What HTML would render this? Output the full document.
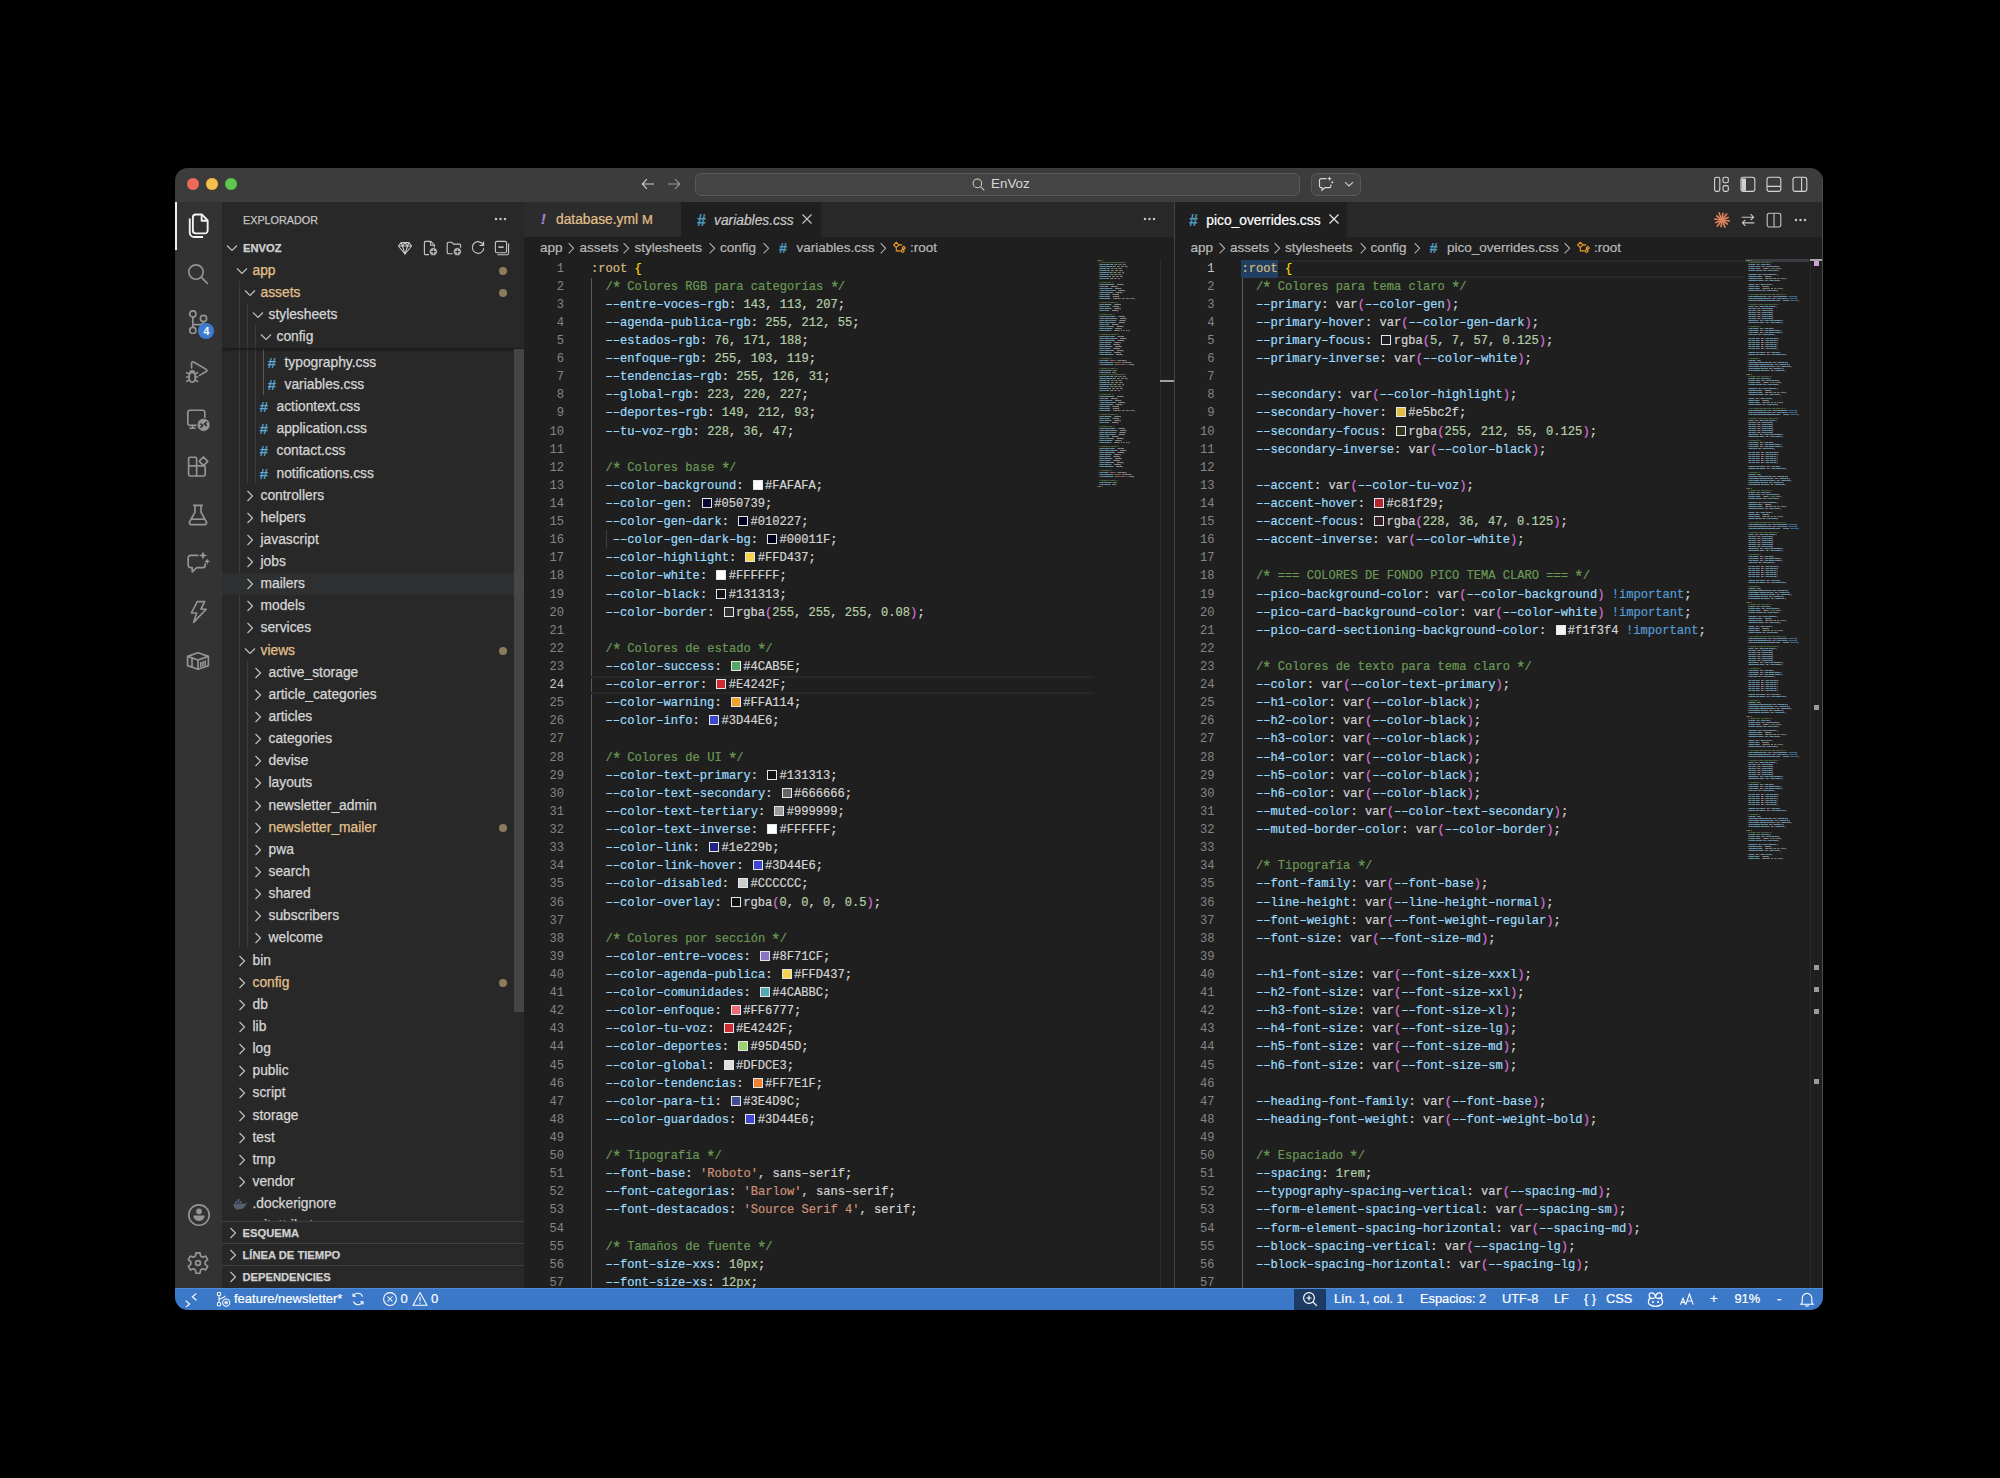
<!DOCTYPE html>
<html><head><meta charset="utf-8"><title>VS Code</title>
<style>
html,body{margin:0;padding:0;background:#000;width:2000px;height:1478px;overflow:hidden}
body{position:relative;font-family:"Liberation Sans",sans-serif}
.win{position:absolute;left:175px;top:168px;width:1648px;height:1142px;border-radius:13px;overflow:hidden;background:#1f1f1f}
.in{position:absolute;left:-175px;top:-168px;width:2000px;height:1478px}
.abs{position:absolute}
.titlebar{position:absolute;left:175px;top:168px;width:1648px;height:34px;background:#3c3c3c}
.tl{position:absolute;width:12px;height:12px;border-radius:50%;top:178px}
.actbar{position:absolute;left:175px;top:202px;width:47px;height:1086px;background:#333333}
.sidebar{position:absolute;left:222px;top:202px;width:302px;height:1086px;background:#282828}
.ed1{position:absolute;left:524px;top:202px;width:650px;height:1086px;background:#1f1f1f}
.ed2{position:absolute;left:1175px;top:202px;width:648px;height:1086px;background:#1f1f1f}
.tabbar{position:absolute;top:202px;height:35px;background:#282828}
.status{position:absolute;left:175px;top:1288px;width:1648px;height:22px;background:#3b78c8;border-top:1px solid #4f8ad8;box-sizing:border-box}
.sb{position:absolute;top:1288px;height:22px;line-height:22px;color:#fff;font-size:12.5px;white-space:pre;-webkit-text-stroke:0.2px currentColor}
/* sidebar text */
.tr{position:absolute;height:22px;line-height:22px;font-size:13.8px;color:#d6d6d6;white-space:pre;-webkit-text-stroke:0.25px currentColor}
.tr.git{color:#e2c08d}
.hash{position:absolute;height:22px;line-height:22px;font-size:15.5px;color:#5aa5d4;font-weight:bold;white-space:pre}
.tchev{position:absolute;width:16px;height:16px}
.chev{width:16px;height:16px;display:block}
.gdot{position:absolute;width:8px;height:8px;border-radius:50%;background:#8d7b5e}
.guide{position:absolute;width:1px;background:#3e3e3e}
/* code */
.ln{position:absolute;width:40px;text-align:right;height:18px;line-height:18px;font-family:"Liberation Mono",monospace;font-size:12.1px;color:#858585;white-space:pre}
.ln.cur{color:#c6c6c6}
.cl{position:absolute;height:18px;line-height:18px;font-family:"Liberation Mono",monospace;font-size:12.1px;color:#d4d4d4;white-space:pre;-webkit-text-stroke:0.2px currentColor}
.p{color:#9cdcfe}.n{color:#b5cea8}.c{color:#6a9955}.s{color:#ce9178}.pr{color:#da70d6}.imp{color:#569cd6}.sel{color:#d7ba7d}.sc{color:#d7ba7d}.br{color:#ffd700}
.sw{display:inline-block;box-sizing:border-box;width:10px;height:10px;margin:0 2.26px 0 2px;border:1px solid #e6e6e6;vertical-align:-1px;background:var(--c);filter:saturate(.85)}
.crumb{position:absolute;top:237px;height:22px;line-height:22px;font-size:13.5px;color:#bababa;white-space:pre;-webkit-text-stroke:0.2px currentColor}
.tabt{position:absolute;top:202px;height:35px;line-height:35px;font-size:13.8px;white-space:pre;-webkit-text-stroke:0.2px currentColor}
.ico{position:absolute}
.dock{position:absolute;width:15px;height:10px}
.ast{display:inline-block;transform:translateY(2px) scale(1.3);font-weight:normal}
.mini{position:absolute;transform-origin:0 0;font-family:"Liberation Mono",monospace;font-size:12.1px;line-height:17.5px;color:#d4d4d4;white-space:pre;width:600px;font-weight:bold;opacity:.7;-webkit-text-stroke:1.5px currentColor}
.mini div{height:17.5px}
.swm{display:inline-block;width:14.5px;height:10px}

</style></head>
<body>
<div class="win"><div class="in">
<!-- ============ TITLE BAR ============ -->
<div class="titlebar"></div>
<div class="tl" style="left:186.7px;background:#ed6a5e;box-shadow:inset 0 0 0 .5px #d2574c"></div>
<div class="tl" style="left:206px;background:#f4bf4f;box-shadow:inset 0 0 0 .5px #d6a243"></div>
<div class="tl" style="left:225.3px;background:#61c554;box-shadow:inset 0 0 0 .5px #52a93f"></div>
<svg class="ico" style="left:640px;top:176px" width="16" height="16" viewBox="0 0 16 16"><path d="M14 8H2.5M7 3.2L2.2 8 7 12.8" fill="none" stroke="#d0d0d0" stroke-width="1.1"/></svg>
<svg class="ico" style="left:666px;top:176px" width="16" height="16" viewBox="0 0 16 16"><path d="M2 8h11.5M9 3.2L13.8 8 9 12.8" fill="none" stroke="#9a9a9a" stroke-width="1.1"/></svg>
<div class="abs" style="left:695px;top:172.5px;width:605px;height:23.5px;box-sizing:border-box;border:1px solid #595959;border-radius:6px;background:#444444"></div>
<svg class="ico" style="left:971px;top:177px" width="15" height="15" viewBox="0 0 16 16"><circle cx="6.8" cy="6.8" r="4.6" fill="none" stroke="#cfcfcf" stroke-width="1.1"/><path d="M10.2 10.2l4 4" stroke="#cfcfcf" stroke-width="1.2"/></svg>
<div class="abs" style="left:991px;top:172px;height:24px;line-height:24px;font-size:13.4px;color:#d8d8d8">EnVoz</div>
<div class="abs" style="left:1310.5px;top:172.5px;width:50px;height:23.5px;box-sizing:border-box;border:1px solid #595959;border-radius:6px;background:#444444"></div>
<svg class="ico" style="left:1317px;top:175px" width="18" height="18" viewBox="0 0 18 18"><path d="M9.5 3.6H4.2a1.7 1.7 0 0 0-1.7 1.7v5.6a1.7 1.7 0 0 0 1.7 1.7h.8v2.7l3-2.7h4.2a1.7 1.7 0 0 0 1.7-1.7V9.4" fill="none" stroke="#d8d8d8" stroke-width="1.15"/><path d="M12.5 1.2l.7 1.7 1.7.7-1.7.7-.7 1.7-.7-1.7-1.7-.7 1.7-.7zM15.2 5.6l.5 1.1 1.1.5-1.1.5-.5 1.1-.5-1.1-1.1-.5 1.1-.5z" fill="#d8d8d8"/></svg>
<svg class="ico" style="left:1343px;top:178px" width="12" height="12" viewBox="0 0 12 12"><path d="M2 4.2l4 3.8 4-3.8" fill="none" stroke="#d0d0d0" stroke-width="1.05"/></svg>
<!-- right layout icons -->
<svg class="ico" style="left:1713px;top:176px" width="17" height="17" viewBox="0 0 17 17" fill="none" stroke="#d6d6d6" stroke-width="1.1"><rect x="1.6" y="1.2" width="5.2" height="14.2" rx="1.8"/><rect x="10" y="1.2" width="5.3" height="5.6" rx="1.6"/><rect x="10" y="9.6" width="5.3" height="5.8" rx="1.6"/></svg>
<svg class="ico" style="left:1740px;top:176px" width="16" height="17" viewBox="0 0 16 17"><rect x="1" y="1.2" width="13.8" height="14.2" rx="2.4" fill="none" stroke="#d6d6d6" stroke-width="1.1"/><path d="M1.6 2.5h4.4v12.3H1.6z" fill="#cfcfcf"/></svg>
<svg class="ico" style="left:1766px;top:176px" width="16" height="17" viewBox="0 0 16 17" fill="none" stroke="#d6d6d6" stroke-width="1.1"><rect x="1" y="1.2" width="13.8" height="14.2" rx="2.4"/><path d="M1.2 10.4h13.4"/></svg>
<svg class="ico" style="left:1792px;top:176px" width="16" height="17" viewBox="0 0 16 17" fill="none" stroke="#d6d6d6" stroke-width="1.1"><rect x="1" y="1.2" width="13.8" height="14.2" rx="2.4"/><path d="M9.6 1.4v14"/></svg>

<!-- ============ ACTIVITY BAR ============ -->
<div class="actbar"></div>
<div class="abs" style="left:175px;top:202px;width:1.5px;height:48px;background:#f0f0f0"></div>
<svg class="ico" style="left:185.5px;top:213.0px" width="25" height="25" viewBox="0 0 24 24" ><g fill="none" stroke="#f4f4f4" stroke-width="1.8" stroke-linejoin="round"><path d="M9.4 1.4h5.8l5.6 5.8v9.6a2.8 2.8 0 0 1-2.8 2.8H9.4a2.8 2.8 0 0 1-2.8-2.8V4.2a2.8 2.8 0 0 1 2.8-2.8z"/><path d="M15 1.6v5.8h5.7"/><path d="M3.6 5.2v13.4a4.4 4.4 0 0 0 4.4 4.4h8.4"/></g></svg>
<svg class="ico" style="left:186.0px;top:261.5px" width="24" height="24" viewBox="0 0 24 24" ><g fill="none" stroke="#959595" stroke-width="1.65"><circle cx="10" cy="10" r="7.2"/><path d="M15.2 15.2l6.6 6.6"/></g></svg>
<svg class="ico" style="left:186.0px;top:310.0px" width="24" height="24" viewBox="0 0 24 24" ><g fill="none" stroke="#959595" stroke-width="1.65"><circle cx="6.8" cy="3.9" r="3.1"/><circle cx="6.8" cy="20.5" r="3.1"/><circle cx="17.5" cy="8.5" r="3.1"/><path d="M6.8 7v10.4M6.8 14.6h7.4a3.3 3.3 0 0 0 3.3-3.1"/></g></svg>
<div class="abs" style="left:198.3px;top:323px;width:16px;height:16px;border-radius:50%;background:#3b7bd0;color:#fff;font-size:10.5px;font-weight:bold;line-height:16px;text-align:center">4</div>
<svg class="ico" style="left:186.0px;top:359.0px" width="24" height="24" viewBox="0 0 24 24" ><g fill="none" stroke="#959595" stroke-width="1.65" stroke-linejoin="round" stroke-linecap="round"><path d="M5.6 9V4.1a1.3 1.3 0 0 1 2-1.1l12.7 7.4a1.2 1.2 0 0 1 0 2.1l-6.8 3.9"/><path d="M3.2 16.4a3 3 0 0 1 6 0v3.4a3 3.4 0 0 1-6 0z"/><path d="M4 13.8a2.2 2 0 0 1 4.4 0M.9 13.6l2.2 1.6M11.5 13.6l-2.2 1.6M.7 18h2.4M9.3 18h2.4M.9 22.4l2.2-1.6M11.5 22.4l-2.2-1.6"/></g></svg>
<svg class="ico" style="left:186.0px;top:407.5px" width="24" height="24" viewBox="0 0 24 24" ><g fill="none" stroke="#959595" stroke-width="1.65" stroke-linecap="round"><path d="M11 17.4H4A2.2 2.2 0 0 1 1.8 15.2V4.4A2.2 2.2 0 0 1 4 2.2h12.6a2.2 2.2 0 0 1 2.2 2.2v6.2"/><path d="M6.6 17.6v2.4M4 20.2h5.2"/></g><circle cx="17.6" cy="16.9" r="6.6" fill="#959595" stroke="#333" stroke-width="1"/><path d="M14.3 15.6l2.5 2-2.5 2M20.9 13.9l-2.5 2 2.5 2" fill="none" stroke="#2b2b2b" stroke-width="1.35"/></svg>
<svg class="ico" style="left:186.0px;top:455.0px" width="24" height="24" viewBox="0 0 24 24" ><g fill="none" stroke="#959595" stroke-width="1.65" stroke-linejoin="round"><path d="M2.6 8.2V3.6a1.4 1.4 0 0 1 1.4-1.4h5.2a1.4 1.4 0 0 1 1.4 1.4v7.2h7.2a1.4 1.4 0 0 1 1.4 1.4v7.4a1.4 1.4 0 0 1-1.4 1.4H4a1.4 1.4 0 0 1-1.4-1.4z"/><path d="M2.6 10.8h8M10.6 10.8v10.6"/><path d="M13.2 6.2l4.2-4.2 4.4 4.4-4.2 4.2z"/></g></svg>
<svg class="ico" style="left:186.0px;top:503.0px" width="24" height="24" viewBox="0 0 24 24" ><g fill="none" stroke="#959595" stroke-width="1.65" stroke-linejoin="round"><path d="M7 2.4h10M9 2.6v6.6L3.6 19a1.8 1.8 0 0 0 1.6 2.6h13.6a1.8 1.8 0 0 0 1.6-2.6L15 9.2V2.6"/><path d="M5.6 16.2h12.8"/></g></svg>
<svg class="ico" style="left:186.0px;top:551.0px" width="24" height="24" viewBox="0 0 24 24" ><g fill="none" stroke="#959595" stroke-width="1.65" stroke-linejoin="round"><path d="M12.4 4.4H4.6a2.4 2.4 0 0 0-2.4 2.4v7.4a2.4 2.4 0 0 0 2.4 2.4h1.6v4.2l4.6-4.2h6a2.4 2.4 0 0 0 2.4-2.4v-2"/></g><path d="M17 .2l1.2 3 3 1.2-3 1.2-1.2 3-1.2-3-3-1.2 3-1.2zM21.2 7.4l.9 2.1 2.1.9-2.1.9-.9 2.1-.9-2.1-2.1-.9 2.1-.9z" fill="#959595"/></svg>
<svg class="ico" style="left:186.0px;top:600.0px" width="24" height="24" viewBox="0 0 24 24" ><path d="M11.2 1.6h7.4l-3.6 7.6h5.2L7.6 22.4l3-9.4H5.4z" fill="none" stroke="#959595" stroke-width="1.65" stroke-linejoin="round"/></svg>
<svg class="ico" style="left:186.0px;top:648.0px" width="24" height="24" viewBox="0 0 24 24" ><g fill="none" stroke="#959595" stroke-width="1.65" stroke-linejoin="round"><path d="M1.6 8.4L12 4.8l10.4 3.6v9.2L12 21.2 1.6 17.6z"/><path d="M1.6 8.4L12 12l10.4-3.6M12 12v9.2M6 10v9"/><path d="M14.8 14v5M17 13.3v5M19.2 12.5v5"/></g></svg>
<svg class="ico" style="left:186.5px;top:1203.0px" width="24" height="24" viewBox="0 0 24 24" ><circle cx="12" cy="12" r="10.2" fill="none" stroke="#959595" stroke-width="1.65"/><circle cx="12" cy="8.4" r="2.8" fill="#959595"/><path d="M6.4 12.6h11.2c0 3.2-2.4 5.4-5.6 5.4s-5.6-2.2-5.6-5.4z" fill="#959595"/></svg>
<svg class="ico" style="left:186.0px;top:1251.0px" width="24" height="24" viewBox="0 0 24 24" ><g fill="none" stroke="#959595" stroke-width="1.65" stroke-linejoin="round"><path d="M10 1.8h4l.6 3.2 2 1.2 3.1-1.1 2 3.5-2.5 2.1v2.6l2.5 2.1-2 3.5-3.1-1.1-2 1.2-.6 3.2h-4l-.6-3.2-2-1.2-3.1 1.1-2-3.5 2.5-2.1v-2.6L2.3 8.6l2-3.5 3.1 1.1 2-1.2z"/><circle cx="12" cy="12" r="2.4"/></g></svg>

<!-- ============ SIDEBAR ============ -->
<div class="sidebar"></div>
<div class="tr" style="left:243px;top:209px;font-size:10.8px;color:#c4c4c4">EXPLORADOR</div>
<div class="abs" style="left:494px;top:213px;width:13px;height:12px"><svg width="13" height="12" viewBox="0 0 13 12" style="display:block"><circle cx="2" cy="6" r="1.25" fill="#c5c5c5"/><circle cx="6.5" cy="6" r="1.25" fill="#c5c5c5"/><circle cx="11" cy="6" r="1.25" fill="#c5c5c5"/></svg></div>
<div class="tchev" style="left:224px;top:240px"><svg class="chev" viewBox="0 0 16 16"><path d="M3 5.5l5 5 5-5" fill="none" stroke="#c5c5c5" stroke-width="1.1"/></svg></div>
<div class="tr" style="left:243px;top:237px;font-size:11.2px;font-weight:bold;color:#d0d0d0">ENVOZ</div>
<svg class="ico" style="left:397.0px;top:240.0px" width="16" height="16" viewBox="0 0 16 16" ><g fill="none" stroke="#c8c8c8" stroke-width="1.1" stroke-linejoin="round"><path d="M4.2 2.6h7.6l2.8 3.4L8 14 1.4 6z"/><path d="M1.4 6h13.2M5.4 6L8 14l2.6-8M4.2 2.6L5.4 6 8 2.6 10.6 6l1.2-3.4"/></g></svg>
<svg class="ico" style="left:422.0px;top:240.0px" width="16" height="16" viewBox="0 0 16 16" ><g fill="none" stroke="#c8c8c8" stroke-width="1.1" stroke-linejoin="round"><path d="M7 14.6H3.6a1.2 1.2 0 0 1-1.2-1.2V2.6a1.2 1.2 0 0 1 1.2-1.2h5.2l3.6 3.8v2.4"/><path d="M8.6 1.6v3.6h3.7"/></g><circle cx="11.4" cy="11.6" r="3.9" fill="#c2c2c2" stroke="#282828" stroke-width=".6"/><path d="M11.4 9.4v4.4M9.2 11.6h4.4" stroke="#2a2a2a" stroke-width="1.1"/></svg>
<svg class="ico" style="left:446.0px;top:240.0px" width="16" height="16" viewBox="0 0 16 16" ><g fill="none" stroke="#c8c8c8" stroke-width="1.1" stroke-linejoin="round"><path d="M6.6 13.8H2.4a1.2 1.2 0 0 1-1.2-1.2V3.4a1.2 1.2 0 0 1 1.2-1.2h2.8c.6 0 1 .4 1.4.9l.8 1h6a1.2 1.2 0 0 1 1.2 1.2v2.4"/></g><circle cx="11.4" cy="11.6" r="3.9" fill="#c2c2c2" stroke="#282828" stroke-width=".6"/><path d="M11.4 9.4v4.4M9.2 11.6h4.4" stroke="#2a2a2a" stroke-width="1.1"/></svg>
<svg class="ico" style="left:470.0px;top:240.0px" width="16" height="16" viewBox="0 0 16 16" ><g fill="none" stroke="#c8c8c8" stroke-width="1.15"><path d="M13.4 5.2a5.8 5.8 0 1 0 .4 3.2"/><path d="M13.6 1.4v4h-4"/></g></svg>
<svg class="ico" style="left:494.0px;top:240.0px" width="16" height="16" viewBox="0 0 16 16" ><g fill="none" stroke="#c8c8c8" stroke-width="1.1"><rect x="1.4" y="1.4" width="11.2" height="11.4" rx="1.6"/><path d="M14.6 3.6v9.4a1.8 1.8 0 0 1-1.8 1.8H3.4"/></g><path d="M4.4 7.1h5.2" stroke="#b8b8b8" stroke-width="1.8"/></svg>
<div class="guide" style="left:239px;top:281px;height:667px;background:#3a3a3a"></div>
<div class="guide" style="left:247px;top:303px;height:180px;background:#3a3a3a"></div>
<div class="guide" style="left:255px;top:325px;height:158px;background:#3a3a3a"></div>
<div class="guide" style="left:263px;top:348px;height:47px;background:#585858"></div>
<div class="guide" style="left:247px;top:660px;height:288px;background:#3a3a3a"></div>
<div class="tchev" style="left:233.5px;top:262.8px"><svg class="chev" viewBox="0 0 16 16"><path d="M3 5.5l5 5 5-5" fill="none" stroke="#c5c5c5" stroke-width="1.1"/></svg></div><div class="tr git" style="left:252.5px;top:259.8px">app</div><div class="gdot" style="left:499px;top:266.8px"></div>
<div class="tchev" style="left:241.5px;top:284.8px"><svg class="chev" viewBox="0 0 16 16"><path d="M3 5.5l5 5 5-5" fill="none" stroke="#c5c5c5" stroke-width="1.1"/></svg></div><div class="tr git" style="left:260.5px;top:281.8px">assets</div><div class="gdot" style="left:499px;top:288.8px"></div>
<div class="tchev" style="left:249.5px;top:306.8px"><svg class="chev" viewBox="0 0 16 16"><path d="M3 5.5l5 5 5-5" fill="none" stroke="#c5c5c5" stroke-width="1.1"/></svg></div><div class="tr" style="left:268.5px;top:303.8px">stylesheets</div>
<div class="tchev" style="left:257.5px;top:328.8px"><svg class="chev" viewBox="0 0 16 16"><path d="M3 5.5l5 5 5-5" fill="none" stroke="#c5c5c5" stroke-width="1.1"/></svg></div><div class="tr" style="left:276.5px;top:325.8px">config</div>
<div class="abs" style="left:222px;top:348.3px;width:302px;height:1.2px;background:#1c1c1c;box-shadow:0 1px 2px #161616"></div>
<div class="abs" style="left:222px;top:572.5px;width:302px;height:22px;background:#2e2f31"></div>
<div class="hash" style="left:267.5px;top:351.8px">#</div><div class="tr" style="left:284.5px;top:351.8px">typography.css</div>
<div class="hash" style="left:267.5px;top:373.94px">#</div><div class="tr" style="left:284.5px;top:373.94px">variables.css</div>
<div class="hash" style="left:259.5px;top:396.08px">#</div><div class="tr" style="left:276.5px;top:396.08px">actiontext.css</div>
<div class="hash" style="left:259.5px;top:418.21999999999997px">#</div><div class="tr" style="left:276.5px;top:418.21999999999997px">application.css</div>
<div class="hash" style="left:259.5px;top:440.35999999999996px">#</div><div class="tr" style="left:276.5px;top:440.35999999999996px">contact.css</div>
<div class="hash" style="left:259.5px;top:462.49999999999994px">#</div><div class="tr" style="left:276.5px;top:462.49999999999994px">notifications.css</div>
<div class="tchev" style="left:241.5px;top:487.63999999999993px"><svg class="chev" viewBox="0 0 16 16"><path d="M5.5 3l5 5-5 5" fill="none" stroke="#c5c5c5" stroke-width="1.1"/></svg></div><div class="tr" style="left:260.5px;top:484.63999999999993px">controllers</div>
<div class="tchev" style="left:241.5px;top:509.78px"><svg class="chev" viewBox="0 0 16 16"><path d="M5.5 3l5 5-5 5" fill="none" stroke="#c5c5c5" stroke-width="1.1"/></svg></div><div class="tr" style="left:260.5px;top:506.78px">helpers</div>
<div class="tchev" style="left:241.5px;top:531.92px"><svg class="chev" viewBox="0 0 16 16"><path d="M5.5 3l5 5-5 5" fill="none" stroke="#c5c5c5" stroke-width="1.1"/></svg></div><div class="tr" style="left:260.5px;top:528.92px">javascript</div>
<div class="tchev" style="left:241.5px;top:554.06px"><svg class="chev" viewBox="0 0 16 16"><path d="M5.5 3l5 5-5 5" fill="none" stroke="#c5c5c5" stroke-width="1.1"/></svg></div><div class="tr" style="left:260.5px;top:551.06px">jobs</div>
<div class="tchev" style="left:241.5px;top:576.1999999999999px"><svg class="chev" viewBox="0 0 16 16"><path d="M5.5 3l5 5-5 5" fill="none" stroke="#c5c5c5" stroke-width="1.1"/></svg></div><div class="tr" style="left:260.5px;top:573.1999999999999px">mailers</div>
<div class="tchev" style="left:241.5px;top:598.3399999999999px"><svg class="chev" viewBox="0 0 16 16"><path d="M5.5 3l5 5-5 5" fill="none" stroke="#c5c5c5" stroke-width="1.1"/></svg></div><div class="tr" style="left:260.5px;top:595.3399999999999px">models</div>
<div class="tchev" style="left:241.5px;top:620.4799999999999px"><svg class="chev" viewBox="0 0 16 16"><path d="M5.5 3l5 5-5 5" fill="none" stroke="#c5c5c5" stroke-width="1.1"/></svg></div><div class="tr" style="left:260.5px;top:617.4799999999999px">services</div>
<div class="tchev" style="left:241.5px;top:642.6199999999999px"><svg class="chev" viewBox="0 0 16 16"><path d="M3 5.5l5 5 5-5" fill="none" stroke="#c5c5c5" stroke-width="1.1"/></svg></div><div class="tr git" style="left:260.5px;top:639.6199999999999px">views</div><div class="gdot" style="left:499px;top:646.6199999999999px"></div>
<div class="tchev" style="left:249.5px;top:664.7599999999999px"><svg class="chev" viewBox="0 0 16 16"><path d="M5.5 3l5 5-5 5" fill="none" stroke="#c5c5c5" stroke-width="1.1"/></svg></div><div class="tr" style="left:268.5px;top:661.7599999999999px">active_storage</div>
<div class="tchev" style="left:249.5px;top:686.8999999999999px"><svg class="chev" viewBox="0 0 16 16"><path d="M5.5 3l5 5-5 5" fill="none" stroke="#c5c5c5" stroke-width="1.1"/></svg></div><div class="tr" style="left:268.5px;top:683.8999999999999px">article_categories</div>
<div class="tchev" style="left:249.5px;top:709.0399999999998px"><svg class="chev" viewBox="0 0 16 16"><path d="M5.5 3l5 5-5 5" fill="none" stroke="#c5c5c5" stroke-width="1.1"/></svg></div><div class="tr" style="left:268.5px;top:706.0399999999998px">articles</div>
<div class="tchev" style="left:249.5px;top:731.1799999999998px"><svg class="chev" viewBox="0 0 16 16"><path d="M5.5 3l5 5-5 5" fill="none" stroke="#c5c5c5" stroke-width="1.1"/></svg></div><div class="tr" style="left:268.5px;top:728.1799999999998px">categories</div>
<div class="tchev" style="left:249.5px;top:753.3199999999998px"><svg class="chev" viewBox="0 0 16 16"><path d="M5.5 3l5 5-5 5" fill="none" stroke="#c5c5c5" stroke-width="1.1"/></svg></div><div class="tr" style="left:268.5px;top:750.3199999999998px">devise</div>
<div class="tchev" style="left:249.5px;top:775.4599999999998px"><svg class="chev" viewBox="0 0 16 16"><path d="M5.5 3l5 5-5 5" fill="none" stroke="#c5c5c5" stroke-width="1.1"/></svg></div><div class="tr" style="left:268.5px;top:772.4599999999998px">layouts</div>
<div class="tchev" style="left:249.5px;top:797.5999999999998px"><svg class="chev" viewBox="0 0 16 16"><path d="M5.5 3l5 5-5 5" fill="none" stroke="#c5c5c5" stroke-width="1.1"/></svg></div><div class="tr" style="left:268.5px;top:794.5999999999998px">newsletter_admin</div>
<div class="tchev" style="left:249.5px;top:819.7399999999998px"><svg class="chev" viewBox="0 0 16 16"><path d="M5.5 3l5 5-5 5" fill="none" stroke="#c5c5c5" stroke-width="1.1"/></svg></div><div class="tr git" style="left:268.5px;top:816.7399999999998px">newsletter_mailer</div><div class="gdot" style="left:499px;top:823.7399999999998px"></div>
<div class="tchev" style="left:249.5px;top:841.8799999999998px"><svg class="chev" viewBox="0 0 16 16"><path d="M5.5 3l5 5-5 5" fill="none" stroke="#c5c5c5" stroke-width="1.1"/></svg></div><div class="tr" style="left:268.5px;top:838.8799999999998px">pwa</div>
<div class="tchev" style="left:249.5px;top:864.0199999999998px"><svg class="chev" viewBox="0 0 16 16"><path d="M5.5 3l5 5-5 5" fill="none" stroke="#c5c5c5" stroke-width="1.1"/></svg></div><div class="tr" style="left:268.5px;top:861.0199999999998px">search</div>
<div class="tchev" style="left:249.5px;top:886.1599999999997px"><svg class="chev" viewBox="0 0 16 16"><path d="M5.5 3l5 5-5 5" fill="none" stroke="#c5c5c5" stroke-width="1.1"/></svg></div><div class="tr" style="left:268.5px;top:883.1599999999997px">shared</div>
<div class="tchev" style="left:249.5px;top:908.2999999999997px"><svg class="chev" viewBox="0 0 16 16"><path d="M5.5 3l5 5-5 5" fill="none" stroke="#c5c5c5" stroke-width="1.1"/></svg></div><div class="tr" style="left:268.5px;top:905.2999999999997px">subscribers</div>
<div class="tchev" style="left:249.5px;top:930.4399999999997px"><svg class="chev" viewBox="0 0 16 16"><path d="M5.5 3l5 5-5 5" fill="none" stroke="#c5c5c5" stroke-width="1.1"/></svg></div><div class="tr" style="left:268.5px;top:927.4399999999997px">welcome</div>
<div class="tchev" style="left:233.5px;top:952.5799999999997px"><svg class="chev" viewBox="0 0 16 16"><path d="M5.5 3l5 5-5 5" fill="none" stroke="#c5c5c5" stroke-width="1.1"/></svg></div><div class="tr" style="left:252.5px;top:949.5799999999997px">bin</div>
<div class="tchev" style="left:233.5px;top:974.7199999999997px"><svg class="chev" viewBox="0 0 16 16"><path d="M5.5 3l5 5-5 5" fill="none" stroke="#c5c5c5" stroke-width="1.1"/></svg></div><div class="tr git" style="left:252.5px;top:971.7199999999997px">config</div><div class="gdot" style="left:499px;top:978.7199999999997px"></div>
<div class="tchev" style="left:233.5px;top:996.8599999999997px"><svg class="chev" viewBox="0 0 16 16"><path d="M5.5 3l5 5-5 5" fill="none" stroke="#c5c5c5" stroke-width="1.1"/></svg></div><div class="tr" style="left:252.5px;top:993.8599999999997px">db</div>
<div class="tchev" style="left:233.5px;top:1018.9999999999998px"><svg class="chev" viewBox="0 0 16 16"><path d="M5.5 3l5 5-5 5" fill="none" stroke="#c5c5c5" stroke-width="1.1"/></svg></div><div class="tr" style="left:252.5px;top:1015.9999999999998px">lib</div>
<div class="tchev" style="left:233.5px;top:1041.1399999999999px"><svg class="chev" viewBox="0 0 16 16"><path d="M5.5 3l5 5-5 5" fill="none" stroke="#c5c5c5" stroke-width="1.1"/></svg></div><div class="tr" style="left:252.5px;top:1038.1399999999999px">log</div>
<div class="tchev" style="left:233.5px;top:1063.28px"><svg class="chev" viewBox="0 0 16 16"><path d="M5.5 3l5 5-5 5" fill="none" stroke="#c5c5c5" stroke-width="1.1"/></svg></div><div class="tr" style="left:252.5px;top:1060.28px">public</div>
<div class="tchev" style="left:233.5px;top:1085.42px"><svg class="chev" viewBox="0 0 16 16"><path d="M5.5 3l5 5-5 5" fill="none" stroke="#c5c5c5" stroke-width="1.1"/></svg></div><div class="tr" style="left:252.5px;top:1082.42px">script</div>
<div class="tchev" style="left:233.5px;top:1107.5600000000002px"><svg class="chev" viewBox="0 0 16 16"><path d="M5.5 3l5 5-5 5" fill="none" stroke="#c5c5c5" stroke-width="1.1"/></svg></div><div class="tr" style="left:252.5px;top:1104.5600000000002px">storage</div>
<div class="tchev" style="left:233.5px;top:1129.7000000000003px"><svg class="chev" viewBox="0 0 16 16"><path d="M5.5 3l5 5-5 5" fill="none" stroke="#c5c5c5" stroke-width="1.1"/></svg></div><div class="tr" style="left:252.5px;top:1126.7000000000003px">test</div>
<div class="tchev" style="left:233.5px;top:1151.8400000000004px"><svg class="chev" viewBox="0 0 16 16"><path d="M5.5 3l5 5-5 5" fill="none" stroke="#c5c5c5" stroke-width="1.1"/></svg></div><div class="tr" style="left:252.5px;top:1148.8400000000004px">tmp</div>
<div class="tchev" style="left:233.5px;top:1173.9800000000005px"><svg class="chev" viewBox="0 0 16 16"><path d="M5.5 3l5 5-5 5" fill="none" stroke="#c5c5c5" stroke-width="1.1"/></svg></div><div class="tr" style="left:252.5px;top:1170.9800000000005px">vendor</div>
<svg class="ico" style="left:232.5px;top:1199.1200000000006px" width="15" height="11" viewBox="0 0 15 11"><path d="M0.5 4.8h11.6c.6-1 1.6-1.4 2.4-1.2-.2.8-.8 1.4-1.6 1.6C12 8.6 9 10.6 5.2 10.6 2.2 10.6.6 8.4.5 4.8z" fill="#52616f"/><path d="M2 2.2h2v2H2zM4.4 2.2h2v2h-2zM6.8 2.2h2v2h-2zM4.4 0h2v2h-2z" fill="#52616f"/></svg><div class="tr" style="left:252.5px;top:1193.1200000000006px">.dockerignore</div>
<div class="tr" style="left:252.5px;top:1215.2600000000007px">.gitattributes</div>
<div class="abs" style="left:514px;top:349px;width:10px;height:663px;background:#4a4a4a;opacity:.85"></div>
<!-- bottom panels -->
<div class="abs" style="left:222px;top:1221px;width:302px;height:67px;background:#282828"></div>
<div class="abs" style="left:222px;top:1221px;width:302px;height:1px;background:#3f3f3f"></div>
<div class="abs" style="left:222px;top:1243px;width:302px;height:1px;background:#3f3f3f"></div>
<div class="abs" style="left:222px;top:1265px;width:302px;height:1px;background:#3f3f3f"></div>
<div class="tchev" style="left:225px;top:1224.5px"><svg class="chev" viewBox="0 0 16 16"><path d="M5.5 3l5 5-5 5" fill="none" stroke="#c5c5c5" stroke-width="1.1"/></svg></div>
<div class="tr" style="left:242.5px;top:1221.5px;font-size:11.2px;font-weight:bold;color:#d0d0d0">ESQUEMA</div>
<div class="tchev" style="left:225px;top:1246.5px"><svg class="chev" viewBox="0 0 16 16"><path d="M5.5 3l5 5-5 5" fill="none" stroke="#c5c5c5" stroke-width="1.1"/></svg></div>
<div class="tr" style="left:242.5px;top:1243.5px;font-size:11.2px;font-weight:bold;color:#d0d0d0">LÍNEA DE TIEMPO</div>
<div class="tchev" style="left:225px;top:1268.5px"><svg class="chev" viewBox="0 0 16 16"><path d="M5.5 3l5 5-5 5" fill="none" stroke="#c5c5c5" stroke-width="1.1"/></svg></div>
<div class="tr" style="left:242.5px;top:1265.5px;font-size:11.2px;font-weight:bold;color:#d0d0d0">DEPENDENCIES</div>

<!-- ============ EDITOR GROUP 1 ============ -->
<div class="ed1"></div>
<div class="tabbar" style="left:524px;width:650px"></div>
<div class="abs" style="left:524px;top:202px;width:157px;height:35px;background:#2c2c2c"></div>
<div class="abs" style="left:681px;top:202px;width:140px;height:35px;background:#1f1f1f"></div>
<div class="tabt" style="left:541px;color:#b180d7;font-weight:bold;font-style:italic;font-size:14px">!</div>
<div class="tabt" style="left:556px;color:#e2c08d">database.yml</div>
<div class="tabt" style="left:642px;color:#e2c08d;font-size:13px">M</div>
<div class="tabt" style="left:697px;top:202.5px;color:#519aba;font-weight:bold;font-size:16px">#</div>
<div class="tabt" style="left:714px;top:202.5px;color:#c8c8c8;font-style:italic">variables.css</div>
<svg class="ico" style="left:800px;top:212px" width="14" height="14" viewBox="0 0 14 14"><path d="M2.5 2.5l9 9M11.5 2.5l-9 9" stroke="#c5c5c5" stroke-width="1.1"/></svg>
<div class="abs" style="left:1143px;top:213px;width:13px;height:12px"><svg width="13" height="12" viewBox="0 0 13 12" style="display:block"><circle cx="2" cy="6" r="1.25" fill="#c5c5c5"/><circle cx="6.5" cy="6" r="1.25" fill="#c5c5c5"/><circle cx="11" cy="6" r="1.25" fill="#c5c5c5"/></svg></div>
<div class="crumb" style="left:540px">app</div>
<svg class="ico" style="left:566px;top:241.5px" width="10" height="13" viewBox="0 0 10 13"><path d="M2.6 1.2l5 5.1-5 5.1" fill="none" stroke="#b4b4b4" stroke-width="1.05"/></svg>
<div class="crumb" style="left:579.5px">assets</div>
<svg class="ico" style="left:621px;top:241.5px" width="10" height="13" viewBox="0 0 10 13"><path d="M2.6 1.2l5 5.1-5 5.1" fill="none" stroke="#b4b4b4" stroke-width="1.05"/></svg>
<div class="crumb" style="left:634.5px">stylesheets</div>
<svg class="ico" style="left:707px;top:241.5px" width="10" height="13" viewBox="0 0 10 13"><path d="M2.6 1.2l5 5.1-5 5.1" fill="none" stroke="#b4b4b4" stroke-width="1.05"/></svg>
<div class="crumb" style="left:720px">config</div>
<svg class="ico" style="left:761px;top:241.5px" width="10" height="13" viewBox="0 0 10 13"><path d="M2.6 1.2l5 5.1-5 5.1" fill="none" stroke="#b4b4b4" stroke-width="1.05"/></svg>
<div class="crumb" style="left:779px;color:#519aba;font-weight:bold;font-size:14.5px">#</div>
<div class="crumb" style="left:796.5px">variables.css</div>
<svg class="ico" style="left:878px;top:241.5px" width="10" height="13" viewBox="0 0 10 13"><path d="M2.6 1.2l5 5.1-5 5.1" fill="none" stroke="#b4b4b4" stroke-width="1.05"/></svg>
<svg class="ico" style="left:892px;top:240px" width="15" height="15" viewBox="0 0 16 16"><g fill="none" stroke="#ee9d28" stroke-width="1.15"><path d="M1.8 5.2L4.6 2.4l2.8 2.8-2.8 2.8zM4.6 8v3.6h4M11 8.4l1.6-1.6 1.6 1.6-1.6 1.6zM9.4 11.6l1.8-1.8 1.8 1.8-1.8 1.8z"/><path d="M7.4 5.2h3.4"/></g></svg>
<div class="crumb" style="left:910px">:root</div>
<div class="abs" style="left:591px;top:277.5px;width:1px;height:1010px;background:#5a5a5a"></div>
<div class="abs" style="left:605.5px;top:530px;width:1px;height:18px;background:#404040"></div>
<div class="abs" style="left:591px;top:675.6px;width:503px;height:18.1px;box-sizing:border-box;border-top:2px solid #282828;border-bottom:2px solid #282828"></div>
<div class="ln" style="top:259.50px;left:524px">1</div>
<div class="cl" style="top:259.50px;left:591px"><span class="sc">:</span><span class="sel">root</span> <span class="br">{</span></div>
<div class="ln" style="top:277.62px;left:524px">2</div>
<div class="cl" style="top:277.62px;left:591px">  <span class="c">/<b class="ast">*</b> Colores RGB para categorías <b class="ast">*</b>/</span></div>
<div class="ln" style="top:295.73px;left:524px">3</div>
<div class="cl" style="top:295.73px;left:591px">  <span class="p">&#8211;&#8211;entre&#8211;voces&#8211;rgb</span>: <span class="n">143</span>, <span class="n">113</span>, <span class="n">207</span>;</div>
<div class="ln" style="top:313.85px;left:524px">4</div>
<div class="cl" style="top:313.85px;left:591px">  <span class="p">&#8211;&#8211;agenda&#8211;publica&#8211;rgb</span>: <span class="n">255</span>, <span class="n">212</span>, <span class="n">55</span>;</div>
<div class="ln" style="top:331.96px;left:524px">5</div>
<div class="cl" style="top:331.96px;left:591px">  <span class="p">&#8211;&#8211;estados&#8211;rgb</span>: <span class="n">76</span>, <span class="n">171</span>, <span class="n">188</span>;</div>
<div class="ln" style="top:350.07px;left:524px">6</div>
<div class="cl" style="top:350.07px;left:591px">  <span class="p">&#8211;&#8211;enfoque&#8211;rgb</span>: <span class="n">255</span>, <span class="n">103</span>, <span class="n">119</span>;</div>
<div class="ln" style="top:368.19px;left:524px">7</div>
<div class="cl" style="top:368.19px;left:591px">  <span class="p">&#8211;&#8211;tendencias&#8211;rgb</span>: <span class="n">255</span>, <span class="n">126</span>, <span class="n">31</span>;</div>
<div class="ln" style="top:386.31px;left:524px">8</div>
<div class="cl" style="top:386.31px;left:591px">  <span class="p">&#8211;&#8211;global&#8211;rgb</span>: <span class="n">223</span>, <span class="n">220</span>, <span class="n">227</span>;</div>
<div class="ln" style="top:404.42px;left:524px">9</div>
<div class="cl" style="top:404.42px;left:591px">  <span class="p">&#8211;&#8211;deportes&#8211;rgb</span>: <span class="n">149</span>, <span class="n">212</span>, <span class="n">93</span>;</div>
<div class="ln" style="top:422.53px;left:524px">10</div>
<div class="cl" style="top:422.53px;left:591px">  <span class="p">&#8211;&#8211;tu&#8211;voz&#8211;rgb</span>: <span class="n">228</span>, <span class="n">36</span>, <span class="n">47</span>;</div>
<div class="ln" style="top:440.65px;left:524px">11</div>
<div class="ln" style="top:458.76px;left:524px">12</div>
<div class="cl" style="top:458.76px;left:591px">  <span class="c">/<b class="ast">*</b> Colores base <b class="ast">*</b>/</span></div>
<div class="ln" style="top:476.88px;left:524px">13</div>
<div class="cl" style="top:476.88px;left:591px">  <span class="p">&#8211;&#8211;color&#8211;background</span>: <i class="sw" style="--c:#FAFAFA"></i>#FAFAFA;</div>
<div class="ln" style="top:495.00px;left:524px">14</div>
<div class="cl" style="top:495.00px;left:591px">  <span class="p">&#8211;&#8211;color&#8211;gen</span>: <i class="sw" style="--c:#050739"></i>#050739;</div>
<div class="ln" style="top:513.11px;left:524px">15</div>
<div class="cl" style="top:513.11px;left:591px">  <span class="p">&#8211;&#8211;color&#8211;gen&#8211;dark</span>: <i class="sw" style="--c:#010227"></i>#010227;</div>
<div class="ln" style="top:531.22px;left:524px">16</div>
<div class="cl" style="top:531.22px;left:591px">   <span class="p">&#8211;&#8211;color&#8211;gen&#8211;dark&#8211;bg</span>: <i class="sw" style="--c:#00011F"></i>#00011F;</div>
<div class="ln" style="top:549.34px;left:524px">17</div>
<div class="cl" style="top:549.34px;left:591px">  <span class="p">&#8211;&#8211;color&#8211;highlight</span>: <i class="sw" style="--c:#FFD437"></i>#FFD437;</div>
<div class="ln" style="top:567.45px;left:524px">18</div>
<div class="cl" style="top:567.45px;left:591px">  <span class="p">&#8211;&#8211;color&#8211;white</span>: <i class="sw" style="--c:#FFFFFF"></i>#FFFFFF;</div>
<div class="ln" style="top:585.57px;left:524px">19</div>
<div class="cl" style="top:585.57px;left:591px">  <span class="p">&#8211;&#8211;color&#8211;black</span>: <i class="sw" style="--c:#131313"></i>#131313;</div>
<div class="ln" style="top:603.68px;left:524px">20</div>
<div class="cl" style="top:603.68px;left:591px">  <span class="p">&#8211;&#8211;color&#8211;border</span>: <i class="sw" style="--c:rgba(255,255,255,0.08)"></i>rgba<span class="pr">(</span><span class="n">255</span>, <span class="n">255</span>, <span class="n">255</span>, <span class="n">0.08</span><span class="pr">)</span>;</div>
<div class="ln" style="top:621.80px;left:524px">21</div>
<div class="ln" style="top:639.91px;left:524px">22</div>
<div class="cl" style="top:639.91px;left:591px">  <span class="c">/<b class="ast">*</b> Colores de estado <b class="ast">*</b>/</span></div>
<div class="ln" style="top:658.03px;left:524px">23</div>
<div class="cl" style="top:658.03px;left:591px">  <span class="p">&#8211;&#8211;color&#8211;success</span>: <i class="sw" style="--c:#4CAB5E"></i>#4CAB5E;</div>
<div class="ln cur" style="top:676.14px;left:524px">24</div>
<div class="cl" style="top:676.14px;left:591px">  <span class="p">&#8211;&#8211;color&#8211;error</span>: <i class="sw" style="--c:#E4242F"></i>#E4242F;</div>
<div class="ln" style="top:694.26px;left:524px">25</div>
<div class="cl" style="top:694.26px;left:591px">  <span class="p">&#8211;&#8211;color&#8211;warning</span>: <i class="sw" style="--c:#FFA114"></i>#FFA114;</div>
<div class="ln" style="top:712.38px;left:524px">26</div>
<div class="cl" style="top:712.38px;left:591px">  <span class="p">&#8211;&#8211;color&#8211;info</span>: <i class="sw" style="--c:#3D44E6"></i>#3D44E6;</div>
<div class="ln" style="top:730.49px;left:524px">27</div>
<div class="ln" style="top:748.61px;left:524px">28</div>
<div class="cl" style="top:748.61px;left:591px">  <span class="c">/<b class="ast">*</b> Colores de UI <b class="ast">*</b>/</span></div>
<div class="ln" style="top:766.72px;left:524px">29</div>
<div class="cl" style="top:766.72px;left:591px">  <span class="p">&#8211;&#8211;color&#8211;text&#8211;primary</span>: <i class="sw" style="--c:#131313"></i>#131313;</div>
<div class="ln" style="top:784.83px;left:524px">30</div>
<div class="cl" style="top:784.83px;left:591px">  <span class="p">&#8211;&#8211;color&#8211;text&#8211;secondary</span>: <i class="sw" style="--c:#666666"></i>#666666;</div>
<div class="ln" style="top:802.95px;left:524px">31</div>
<div class="cl" style="top:802.95px;left:591px">  <span class="p">&#8211;&#8211;color&#8211;text&#8211;tertiary</span>: <i class="sw" style="--c:#999999"></i>#999999;</div>
<div class="ln" style="top:821.06px;left:524px">32</div>
<div class="cl" style="top:821.06px;left:591px">  <span class="p">&#8211;&#8211;color&#8211;text&#8211;inverse</span>: <i class="sw" style="--c:#FFFFFF"></i>#FFFFFF;</div>
<div class="ln" style="top:839.18px;left:524px">33</div>
<div class="cl" style="top:839.18px;left:591px">  <span class="p">&#8211;&#8211;color&#8211;link</span>: <i class="sw" style="--c:#1e229b"></i>#1e229b;</div>
<div class="ln" style="top:857.29px;left:524px">34</div>
<div class="cl" style="top:857.29px;left:591px">  <span class="p">&#8211;&#8211;color&#8211;link&#8211;hover</span>: <i class="sw" style="--c:#3D44E6"></i>#3D44E6;</div>
<div class="ln" style="top:875.41px;left:524px">35</div>
<div class="cl" style="top:875.41px;left:591px">  <span class="p">&#8211;&#8211;color&#8211;disabled</span>: <i class="sw" style="--c:#CCCCCC"></i>#CCCCCC;</div>
<div class="ln" style="top:893.52px;left:524px">36</div>
<div class="cl" style="top:893.52px;left:591px">  <span class="p">&#8211;&#8211;color&#8211;overlay</span>: <i class="sw" style="--c:rgba(0,0,0,0.5)"></i>rgba<span class="pr">(</span><span class="n">0</span>, <span class="n">0</span>, <span class="n">0</span>, <span class="n">0.5</span><span class="pr">)</span>;</div>
<div class="ln" style="top:911.64px;left:524px">37</div>
<div class="ln" style="top:929.75px;left:524px">38</div>
<div class="cl" style="top:929.75px;left:591px">  <span class="c">/<b class="ast">*</b> Colores por sección <b class="ast">*</b>/</span></div>
<div class="ln" style="top:947.87px;left:524px">39</div>
<div class="cl" style="top:947.87px;left:591px">  <span class="p">&#8211;&#8211;color&#8211;entre&#8211;voces</span>: <i class="sw" style="--c:#8F71CF"></i>#8F71CF;</div>
<div class="ln" style="top:965.98px;left:524px">40</div>
<div class="cl" style="top:965.98px;left:591px">  <span class="p">&#8211;&#8211;color&#8211;agenda&#8211;publica</span>: <i class="sw" style="--c:#FFD437"></i>#FFD437;</div>
<div class="ln" style="top:984.10px;left:524px">41</div>
<div class="cl" style="top:984.10px;left:591px">  <span class="p">&#8211;&#8211;color&#8211;comunidades</span>: <i class="sw" style="--c:#4CABBC"></i>#4CABBC;</div>
<div class="ln" style="top:1002.21px;left:524px">42</div>
<div class="cl" style="top:1002.21px;left:591px">  <span class="p">&#8211;&#8211;color&#8211;enfoque</span>: <i class="sw" style="--c:#FF6777"></i>#FF6777;</div>
<div class="ln" style="top:1020.33px;left:524px">43</div>
<div class="cl" style="top:1020.33px;left:591px">  <span class="p">&#8211;&#8211;color&#8211;tu&#8211;voz</span>: <i class="sw" style="--c:#E4242F"></i>#E4242F;</div>
<div class="ln" style="top:1038.44px;left:524px">44</div>
<div class="cl" style="top:1038.44px;left:591px">  <span class="p">&#8211;&#8211;color&#8211;deportes</span>: <i class="sw" style="--c:#95D45D"></i>#95D45D;</div>
<div class="ln" style="top:1056.56px;left:524px">45</div>
<div class="cl" style="top:1056.56px;left:591px">  <span class="p">&#8211;&#8211;color&#8211;global</span>: <i class="sw" style="--c:#DFDCE3"></i>#DFDCE3;</div>
<div class="ln" style="top:1074.67px;left:524px">46</div>
<div class="cl" style="top:1074.67px;left:591px">  <span class="p">&#8211;&#8211;color&#8211;tendencias</span>: <i class="sw" style="--c:#FF7E1F"></i>#FF7E1F;</div>
<div class="ln" style="top:1092.79px;left:524px">47</div>
<div class="cl" style="top:1092.79px;left:591px">  <span class="p">&#8211;&#8211;color&#8211;para&#8211;ti</span>: <i class="sw" style="--c:#3E4D9C"></i>#3E4D9C;</div>
<div class="ln" style="top:1110.90px;left:524px">48</div>
<div class="cl" style="top:1110.90px;left:591px">  <span class="p">&#8211;&#8211;color&#8211;guardados</span>: <i class="sw" style="--c:#3D44E6"></i>#3D44E6;</div>
<div class="ln" style="top:1129.02px;left:524px">49</div>
<div class="ln" style="top:1147.13px;left:524px">50</div>
<div class="cl" style="top:1147.13px;left:591px">  <span class="c">/<b class="ast">*</b> Tipografía <b class="ast">*</b>/</span></div>
<div class="ln" style="top:1165.25px;left:524px">51</div>
<div class="cl" style="top:1165.25px;left:591px">  <span class="p">&#8211;&#8211;font&#8211;base</span>: <span class="s">&#x27;Roboto&#x27;</span>, sans&#8211;serif;</div>
<div class="ln" style="top:1183.36px;left:524px">52</div>
<div class="cl" style="top:1183.36px;left:591px">  <span class="p">&#8211;&#8211;font&#8211;categorias</span>: <span class="s">&#x27;Barlow&#x27;</span>, sans&#8211;serif;</div>
<div class="ln" style="top:1201.48px;left:524px">53</div>
<div class="cl" style="top:1201.48px;left:591px">  <span class="p">&#8211;&#8211;font&#8211;destacados</span>: <span class="s">&#x27;Source Serif 4&#x27;</span>, serif;</div>
<div class="ln" style="top:1219.59px;left:524px">54</div>
<div class="ln" style="top:1237.71px;left:524px">55</div>
<div class="cl" style="top:1237.71px;left:591px">  <span class="c">/<b class="ast">*</b> Tamaños de fuente <b class="ast">*</b>/</span></div>
<div class="ln" style="top:1255.82px;left:524px">56</div>
<div class="cl" style="top:1255.82px;left:591px">  <span class="p">&#8211;&#8211;font&#8211;size&#8211;xxs</span>: <span class="n">10px</span>;</div>
<div class="ln" style="top:1273.94px;left:524px">57</div>
<div class="cl" style="top:1273.94px;left:591px">  <span class="p">&#8211;&#8211;font&#8211;size&#8211;xs</span>: <span class="n">12px</span>;</div>
<div class="mini" style="left:1097px;top:260px;transform:scale(0.1143);"><div><span class="sc">:</span><span class="sel">root</span> <span class="br">{</span></div><div>  <span class="c">/* Colores RGB para categorías */</span></div><div>  <span class="p">--entre-voces-rgb</span>: <span class="n">143</span>, <span class="n">113</span>, <span class="n">207</span>;</div><div>  <span class="p">--agenda-publica-rgb</span>: <span class="n">255</span>, <span class="n">212</span>, <span class="n">55</span>;</div><div>  <span class="p">--estados-rgb</span>: <span class="n">76</span>, <span class="n">171</span>, <span class="n">188</span>;</div><div>  <span class="p">--enfoque-rgb</span>: <span class="n">255</span>, <span class="n">103</span>, <span class="n">119</span>;</div><div>  <span class="p">--tendencias-rgb</span>: <span class="n">255</span>, <span class="n">126</span>, <span class="n">31</span>;</div><div>  <span class="p">--global-rgb</span>: <span class="n">223</span>, <span class="n">220</span>, <span class="n">227</span>;</div><div>  <span class="p">--deportes-rgb</span>: <span class="n">149</span>, <span class="n">212</span>, <span class="n">93</span>;</div><div>  <span class="p">--tu-voz-rgb</span>: <span class="n">228</span>, <span class="n">36</span>, <span class="n">47</span>;</div><div> </div><div>  <span class="c">/* Colores base */</span></div><div>  <span class="p">--color-background</span>: <i class="swm"></i>#FAFAFA;</div><div>  <span class="p">--color-gen</span>: <i class="swm"></i>#050739;</div><div>  <span class="p">--color-gen-dark</span>: <i class="swm"></i>#010227;</div><div>   <span class="p">--color-gen-dark-bg</span>: <i class="swm"></i>#00011F;</div><div>  <span class="p">--color-highlight</span>: <i class="swm"></i>#FFD437;</div><div>  <span class="p">--color-white</span>: <i class="swm"></i>#FFFFFF;</div><div>  <span class="p">--color-black</span>: <i class="swm"></i>#131313;</div><div>  <span class="p">--color-border</span>: <i class="swm"></i>rgba<span class="pr">(</span><span class="n">255</span>, <span class="n">255</span>, <span class="n">255</span>, <span class="n">0.08</span><span class="pr">)</span>;</div><div> </div><div>  <span class="c">/* Colores de estado */</span></div><div>  <span class="p">--color-success</span>: <i class="swm"></i>#4CAB5E;</div><div>  <span class="p">--color-error</span>: <i class="swm"></i>#E4242F;</div><div>  <span class="p">--color-warning</span>: <i class="swm"></i>#FFA114;</div><div>  <span class="p">--color-info</span>: <i class="swm"></i>#3D44E6;</div><div> </div><div>  <span class="c">/* Colores de UI */</span></div><div>  <span class="p">--color-text-primary</span>: <i class="swm"></i>#131313;</div><div>  <span class="p">--color-text-secondary</span>: <i class="swm"></i>#666666;</div><div>  <span class="p">--color-text-tertiary</span>: <i class="swm"></i>#999999;</div><div>  <span class="p">--color-text-inverse</span>: <i class="swm"></i>#FFFFFF;</div><div>  <span class="p">--color-link</span>: <i class="swm"></i>#1e229b;</div><div>  <span class="p">--color-link-hover</span>: <i class="swm"></i>#3D44E6;</div><div>  <span class="p">--color-disabled</span>: <i class="swm"></i>#CCCCCC;</div><div>  <span class="p">--color-overlay</span>: <i class="swm"></i>rgba<span class="pr">(</span><span class="n">0</span>, <span class="n">0</span>, <span class="n">0</span>, <span class="n">0.5</span><span class="pr">)</span>;</div><div> </div><div>  <span class="c">/* Colores por sección */</span></div><div>  <span class="p">--color-entre-voces</span>: <i class="swm"></i>#8F71CF;</div><div>  <span class="p">--color-agenda-publica</span>: <i class="swm"></i>#FFD437;</div><div>  <span class="p">--color-comunidades</span>: <i class="swm"></i>#4CABBC;</div><div>  <span class="p">--color-enfoque</span>: <i class="swm"></i>#FF6777;</div><div>  <span class="p">--color-tu-voz</span>: <i class="swm"></i>#E4242F;</div><div>  <span class="p">--color-deportes</span>: <i class="swm"></i>#95D45D;</div><div>  <span class="p">--color-global</span>: <i class="swm"></i>#DFDCE3;</div><div>  <span class="p">--color-tendencias</span>: <i class="swm"></i>#FF7E1F;</div><div>  <span class="p">--color-para-ti</span>: <i class="swm"></i>#3E4D9C;</div><div>  <span class="p">--color-guardados</span>: <i class="swm"></i>#3D44E6;</div><div> </div><div>  <span class="c">/* Tipografía */</span></div><div>  <span class="p">--font-base</span>: <span class="s">&#x27;Roboto&#x27;</span>, sans-serif;</div><div>  <span class="p">--font-categorias</span>: <span class="s">&#x27;Barlow&#x27;</span>, sans-serif;</div><div>  <span class="p">--font-destacados</span>: <span class="s">&#x27;Source Serif 4&#x27;</span>, serif;</div><div> </div><div>  <span class="c">/* Tamaños de fuente */</span></div><div>  <span class="p">--font-size-xxs</span>: <span class="n">10px</span>;</div><div>  <span class="p">--font-size-xs</span>: <span class="n">12px</span>;</div><div>  <span class="c">/* Colores RGB para categorías */</span></div><div>  <span class="p">--entre-voces-rgb</span>: <span class="n">143</span>, <span class="n">113</span>, <span class="n">207</span>;</div><div>  <span class="p">--agenda-publica-rgb</span>: <span class="n">255</span>, <span class="n">212</span>, <span class="n">55</span>;</div><div>  <span class="p">--estados-rgb</span>: <span class="n">76</span>, <span class="n">171</span>, <span class="n">188</span>;</div><div>  <span class="p">--enfoque-rgb</span>: <span class="n">255</span>, <span class="n">103</span>, <span class="n">119</span>;</div><div>  <span class="p">--tendencias-rgb</span>: <span class="n">255</span>, <span class="n">126</span>, <span class="n">31</span>;</div><div>  <span class="p">--global-rgb</span>: <span class="n">223</span>, <span class="n">220</span>, <span class="n">227</span>;</div><div>  <span class="p">--deportes-rgb</span>: <span class="n">149</span>, <span class="n">212</span>, <span class="n">93</span>;</div><div>  <span class="p">--tu-voz-rgb</span>: <span class="n">228</span>, <span class="n">36</span>, <span class="n">47</span>;</div><div> </div><div>  <span class="c">/* Colores base */</span></div><div>  <span class="p">--color-background</span>: <i class="swm"></i>#FAFAFA;</div><div>  <span class="p">--color-gen</span>: <i class="swm"></i>#050739;</div><div>  <span class="p">--color-gen-dark</span>: <i class="swm"></i>#010227;</div><div>   <span class="p">--color-gen-dark-bg</span>: <i class="swm"></i>#00011F;</div><div>  <span class="p">--color-highlight</span>: <i class="swm"></i>#FFD437;</div><div>  <span class="p">--color-white</span>: <i class="swm"></i>#FFFFFF;</div><div>  <span class="p">--color-black</span>: <i class="swm"></i>#131313;</div><div>  <span class="p">--color-border</span>: <i class="swm"></i>rgba<span class="pr">(</span><span class="n">255</span>, <span class="n">255</span>, <span class="n">255</span>, <span class="n">0.08</span><span class="pr">)</span>;</div><div> </div><div>  <span class="c">/* Colores de estado */</span></div><div>  <span class="p">--color-success</span>: <i class="swm"></i>#4CAB5E;</div><div>  <span class="p">--color-error</span>: <i class="swm"></i>#E4242F;</div><div>  <span class="p">--color-warning</span>: <i class="swm"></i>#FFA114;</div><div>  <span class="p">--color-info</span>: <i class="swm"></i>#3D44E6;</div><div> </div><div>  <span class="c">/* Colores de UI */</span></div><div>  <span class="p">--color-text-primary</span>: <i class="swm"></i>#131313;</div><div>  <span class="p">--color-text-secondary</span>: <i class="swm"></i>#666666;</div><div>  <span class="p">--color-text-tertiary</span>: <i class="swm"></i>#999999;</div><div>  <span class="p">--color-text-inverse</span>: <i class="swm"></i>#FFFFFF;</div><div>  <span class="p">--color-link</span>: <i class="swm"></i>#1e229b;</div><div>  <span class="p">--color-link-hover</span>: <i class="swm"></i>#3D44E6;</div><div>  <span class="p">--color-disabled</span>: <i class="swm"></i>#CCCCCC;</div><div>  <span class="p">--color-overlay</span>: <i class="swm"></i>rgba<span class="pr">(</span><span class="n">0</span>, <span class="n">0</span>, <span class="n">0</span>, <span class="n">0.5</span><span class="pr">)</span>;</div><div> </div><div>  <span class="c">/* Colores por sección */</span></div><div>  <span class="p">--color-entre-voces</span>: <i class="swm"></i>#8F71CF;</div><div>  <span class="p">--color-agenda-publica</span>: <i class="swm"></i>#FFD437;</div><div>  <span class="p">--color-comunidades</span>: <i class="swm"></i>#4CABBC;</div><div>  <span class="p">--color-enfoque</span>: <i class="swm"></i>#FF6777;</div><div>  <span class="p">--color-tu-voz</span>: <i class="swm"></i>#E4242F;</div><div>  <span class="p">--color-deportes</span>: <i class="swm"></i>#95D45D;</div><div>  <span class="p">--color-global</span>: <i class="swm"></i>#DFDCE3;</div><div>  <span class="p">--color-tendencias</span>: <i class="swm"></i>#FF7E1F;</div><div>  <span class="p">--color-para-ti</span>: <i class="swm"></i>#3E4D9C;</div><div>  <span class="p">--color-guardados</span>: <i class="swm"></i>#3D44E6;</div><div> </div><div>  <span class="c">/* Tipografía */</span></div><div>  <span class="p">--font-base</span>: <span class="s">&#x27;Roboto&#x27;</span>, sans-serif;</div><div>  <span class="p">--font-categorias</span>: <span class="s">&#x27;Barlow&#x27;</span>, sans-serif;</div><div>  <span class="p">--font-destacados</span>: <span class="s">&#x27;Source Serif 4&#x27;</span>, serif;</div><div> </div><div>  <span class="c">/* Tamaños de fuente */</span></div><div>  <span class="p">--font-size-xxs</span>: <span class="n">10px</span>;</div><div>  <span class="p">--font-size-xs</span>: <span class="n">12px</span>;</div><div><span class="sc">:</span><span class="sel">root</span> <span class="br">{</span></div></div>
<div class="abs" style="left:1160px;top:259px;width:1px;height:1029px;background:#2a2a2a"></div>
<div class="abs" style="left:1160px;top:380px;width:14px;height:2px;background:#a0a0a0"></div>

<div class="abs" style="left:1174px;top:202px;width:1px;height:1086px;background:#444"></div>
<!-- ============ EDITOR GROUP 2 ============ -->
<div class="ed2"></div>
<div class="tabbar" style="left:1175px;width:648px"></div>
<div class="abs" style="left:1175px;top:202px;width:172px;height:35px;background:#1f1f1f"></div>
<div class="tabt" style="left:1189px;top:202.5px;color:#519aba;font-weight:bold;font-size:16px">#</div>
<div class="tabt" style="left:1206.3px;top:202.5px;color:#ffffff">pico_overrides.css</div>
<svg class="ico" style="left:1327px;top:212px" width="14" height="14" viewBox="0 0 14 14"><path d="M2.5 2.5l9 9M11.5 2.5l-9 9" stroke="#e8e8e8" stroke-width="1.2"/></svg>
<svg class="ico" style="left:1713.5px;top:211.5px" width="16" height="16" viewBox="0 0 16 16" ><path d="M8 8L15.54 8.99" stroke="#d9805f" stroke-width="1.7" stroke-linecap="round"/><path d="M8 8L13.24 12.01" stroke="#d9805f" stroke-width="1.7" stroke-linecap="round"/><path d="M8 8L10.91 15.02" stroke="#d9805f" stroke-width="1.7" stroke-linecap="round"/><path d="M8 8L7.14 14.54" stroke="#d9805f" stroke-width="1.7" stroke-linecap="round"/><path d="M8 8L3.38 14.03" stroke="#d9805f" stroke-width="1.7" stroke-linecap="round"/><path d="M8 8L1.90 10.53" stroke="#d9805f" stroke-width="1.7" stroke-linecap="round"/><path d="M8 8L0.46 7.01" stroke="#d9805f" stroke-width="1.7" stroke-linecap="round"/><path d="M8 8L2.76 3.99" stroke="#d9805f" stroke-width="1.7" stroke-linecap="round"/><path d="M8 8L5.09 0.98" stroke="#d9805f" stroke-width="1.7" stroke-linecap="round"/><path d="M8 8L8.86 1.46" stroke="#d9805f" stroke-width="1.7" stroke-linecap="round"/><path d="M8 8L12.62 1.97" stroke="#d9805f" stroke-width="1.7" stroke-linecap="round"/><path d="M8 8L14.10 5.47" stroke="#d9805f" stroke-width="1.7" stroke-linecap="round"/></svg>
<svg class="ico" style="left:1740.0px;top:211.5px" width="16" height="16" viewBox="0 0 16 16" ><g fill="none" stroke="#c5c5c5" stroke-width="1.15"><path d="M1.6 5.2h12M10.6 2.2l3 3-3 3M14.4 10.8h-12M5.4 7.8l-3 3 3 3"/></g></svg>
<svg class="ico" style="left:1766.0px;top:211.5px" width="16" height="16" viewBox="0 0 16 16" ><g fill="none" stroke="#c5c5c5" stroke-width="1.1"><rect x="1.2" y="1.2" width="13.6" height="13.8" rx="2.2"/><path d="M8 1.4v13.6"/></g></svg>
<div class="abs" style="left:1793.5px;top:213.5px;width:13px;height:12px"><svg width="13" height="12" viewBox="0 0 13 12" style="display:block"><circle cx="2" cy="6" r="1.25" fill="#c5c5c5"/><circle cx="6.5" cy="6" r="1.25" fill="#c5c5c5"/><circle cx="11" cy="6" r="1.25" fill="#c5c5c5"/></svg></div>
<div class="crumb" style="left:1190.5px">app</div>
<svg class="ico" style="left:1216.5px;top:241.5px" width="10" height="13" viewBox="0 0 10 13"><path d="M2.6 1.2l5 5.1-5 5.1" fill="none" stroke="#b4b4b4" stroke-width="1.05"/></svg>
<div class="crumb" style="left:1230px">assets</div>
<svg class="ico" style="left:1271.5px;top:241.5px" width="10" height="13" viewBox="0 0 10 13"><path d="M2.6 1.2l5 5.1-5 5.1" fill="none" stroke="#b4b4b4" stroke-width="1.05"/></svg>
<div class="crumb" style="left:1285px">stylesheets</div>
<svg class="ico" style="left:1357.5px;top:241.5px" width="10" height="13" viewBox="0 0 10 13"><path d="M2.6 1.2l5 5.1-5 5.1" fill="none" stroke="#b4b4b4" stroke-width="1.05"/></svg>
<div class="crumb" style="left:1370.5px">config</div>
<svg class="ico" style="left:1411.5px;top:241.5px" width="10" height="13" viewBox="0 0 10 13"><path d="M2.6 1.2l5 5.1-5 5.1" fill="none" stroke="#b4b4b4" stroke-width="1.05"/></svg>
<div class="crumb" style="left:1429.5px;color:#519aba;font-weight:bold;font-size:14.5px">#</div>
<div class="crumb" style="left:1447px">pico_overrides.css</div>
<svg class="ico" style="left:1562px;top:241.5px" width="10" height="13" viewBox="0 0 10 13"><path d="M2.6 1.2l5 5.1-5 5.1" fill="none" stroke="#b4b4b4" stroke-width="1.05"/></svg>
<svg class="ico" style="left:1576px;top:240px" width="15" height="15" viewBox="0 0 16 16"><g fill="none" stroke="#ee9d28" stroke-width="1.15"><path d="M1.8 5.2L4.6 2.4l2.8 2.8-2.8 2.8zM4.6 8v3.6h4M11 8.4l1.6-1.6 1.6 1.6-1.6 1.6zM9.4 11.6l1.8-1.8 1.8 1.8-1.8 1.8z"/><path d="M7.4 5.2h3.4"/></g></svg>
<div class="crumb" style="left:1594px">:root</div>
<div class="abs" style="left:1241.5px;top:277.5px;width:1px;height:1010px;background:#5a5a5a"></div>
<div class="abs" style="left:1241.5px;top:259.5px;width:503px;height:18.1px;box-sizing:border-box;border-top:2px solid #282828;border-bottom:2px solid #282828"></div>
<div class="abs" style="left:1241.3px;top:259.5px;width:36.3px;height:18.1px;background:#213f61"></div>
<div class="ln cur" style="top:259.50px;left:1174.5px">1</div>
<div class="cl" style="top:259.50px;left:1241.5px"><span class="sc">:</span><span class="sel">root</span> <span class="br">{</span></div>
<div class="ln" style="top:277.62px;left:1174.5px">2</div>
<div class="cl" style="top:277.62px;left:1241.5px">  <span class="c">/<b class="ast">*</b> Colores para tema claro <b class="ast">*</b>/</span></div>
<div class="ln" style="top:295.73px;left:1174.5px">3</div>
<div class="cl" style="top:295.73px;left:1241.5px">  <span class="p">&#8211;&#8211;primary</span>: var<span class="pr">(</span><span class="p">&#8211;&#8211;color&#8211;gen</span><span class="pr">)</span>;</div>
<div class="ln" style="top:313.85px;left:1174.5px">4</div>
<div class="cl" style="top:313.85px;left:1241.5px">  <span class="p">&#8211;&#8211;primary&#8211;hover</span>: var<span class="pr">(</span><span class="p">&#8211;&#8211;color&#8211;gen&#8211;dark</span><span class="pr">)</span>;</div>
<div class="ln" style="top:331.96px;left:1174.5px">5</div>
<div class="cl" style="top:331.96px;left:1241.5px">  <span class="p">&#8211;&#8211;primary&#8211;focus</span>: <i class="sw" style="--c:rgba(5,7,57,0.125)"></i>rgba<span class="pr">(</span><span class="n">5</span>, <span class="n">7</span>, <span class="n">57</span>, <span class="n">0.125</span><span class="pr">)</span>;</div>
<div class="ln" style="top:350.07px;left:1174.5px">6</div>
<div class="cl" style="top:350.07px;left:1241.5px">  <span class="p">&#8211;&#8211;primary&#8211;inverse</span>: var<span class="pr">(</span><span class="p">&#8211;&#8211;color&#8211;white</span><span class="pr">)</span>;</div>
<div class="ln" style="top:368.19px;left:1174.5px">7</div>
<div class="ln" style="top:386.31px;left:1174.5px">8</div>
<div class="cl" style="top:386.31px;left:1241.5px">  <span class="p">&#8211;&#8211;secondary</span>: var<span class="pr">(</span><span class="p">&#8211;&#8211;color&#8211;highlight</span><span class="pr">)</span>;</div>
<div class="ln" style="top:404.42px;left:1174.5px">9</div>
<div class="cl" style="top:404.42px;left:1241.5px">  <span class="p">&#8211;&#8211;secondary&#8211;hover</span>: <i class="sw" style="--c:#e5bc2f"></i>#e5bc2f;</div>
<div class="ln" style="top:422.53px;left:1174.5px">10</div>
<div class="cl" style="top:422.53px;left:1241.5px">  <span class="p">&#8211;&#8211;secondary&#8211;focus</span>: <i class="sw" style="--c:rgba(255,212,55,0.125)"></i>rgba<span class="pr">(</span><span class="n">255</span>, <span class="n">212</span>, <span class="n">55</span>, <span class="n">0.125</span><span class="pr">)</span>;</div>
<div class="ln" style="top:440.65px;left:1174.5px">11</div>
<div class="cl" style="top:440.65px;left:1241.5px">  <span class="p">&#8211;&#8211;secondary&#8211;inverse</span>: var<span class="pr">(</span><span class="p">&#8211;&#8211;color&#8211;black</span><span class="pr">)</span>;</div>
<div class="ln" style="top:458.76px;left:1174.5px">12</div>
<div class="ln" style="top:476.88px;left:1174.5px">13</div>
<div class="cl" style="top:476.88px;left:1241.5px">  <span class="p">&#8211;&#8211;accent</span>: var<span class="pr">(</span><span class="p">&#8211;&#8211;color&#8211;tu&#8211;voz</span><span class="pr">)</span>;</div>
<div class="ln" style="top:495.00px;left:1174.5px">14</div>
<div class="cl" style="top:495.00px;left:1241.5px">  <span class="p">&#8211;&#8211;accent&#8211;hover</span>: <i class="sw" style="--c:#c81f29"></i>#c81f29;</div>
<div class="ln" style="top:513.11px;left:1174.5px">15</div>
<div class="cl" style="top:513.11px;left:1241.5px">  <span class="p">&#8211;&#8211;accent&#8211;focus</span>: <i class="sw" style="--c:rgba(228,36,47,0.125)"></i>rgba<span class="pr">(</span><span class="n">228</span>, <span class="n">36</span>, <span class="n">47</span>, <span class="n">0.125</span><span class="pr">)</span>;</div>
<div class="ln" style="top:531.22px;left:1174.5px">16</div>
<div class="cl" style="top:531.22px;left:1241.5px">  <span class="p">&#8211;&#8211;accent&#8211;inverse</span>: var<span class="pr">(</span><span class="p">&#8211;&#8211;color&#8211;white</span><span class="pr">)</span>;</div>
<div class="ln" style="top:549.34px;left:1174.5px">17</div>
<div class="ln" style="top:567.45px;left:1174.5px">18</div>
<div class="cl" style="top:567.45px;left:1241.5px">  <span class="c">/<b class="ast">*</b> === COLORES DE FONDO PICO TEMA CLARO === <b class="ast">*</b>/</span></div>
<div class="ln" style="top:585.57px;left:1174.5px">19</div>
<div class="cl" style="top:585.57px;left:1241.5px">  <span class="p">&#8211;&#8211;pico&#8211;background&#8211;color</span>: var<span class="pr">(</span><span class="p">&#8211;&#8211;color&#8211;background</span><span class="pr">)</span> <span class="imp">!important</span>;</div>
<div class="ln" style="top:603.68px;left:1174.5px">20</div>
<div class="cl" style="top:603.68px;left:1241.5px">  <span class="p">&#8211;&#8211;pico&#8211;card&#8211;background&#8211;color</span>: var<span class="pr">(</span><span class="p">&#8211;&#8211;color&#8211;white</span><span class="pr">)</span> <span class="imp">!important</span>;</div>
<div class="ln" style="top:621.80px;left:1174.5px">21</div>
<div class="cl" style="top:621.80px;left:1241.5px">  <span class="p">&#8211;&#8211;pico&#8211;card&#8211;sectioning&#8211;background&#8211;color</span>: <i class="sw" style="--c:#f1f3f4"></i>#f1f3f4 <span class="imp">!important</span>;</div>
<div class="ln" style="top:639.91px;left:1174.5px">22</div>
<div class="ln" style="top:658.03px;left:1174.5px">23</div>
<div class="cl" style="top:658.03px;left:1241.5px">  <span class="c">/<b class="ast">*</b> Colores de texto para tema claro <b class="ast">*</b>/</span></div>
<div class="ln" style="top:676.14px;left:1174.5px">24</div>
<div class="cl" style="top:676.14px;left:1241.5px">  <span class="p">&#8211;&#8211;color</span>: var<span class="pr">(</span><span class="p">&#8211;&#8211;color&#8211;text&#8211;primary</span><span class="pr">)</span>;</div>
<div class="ln" style="top:694.26px;left:1174.5px">25</div>
<div class="cl" style="top:694.26px;left:1241.5px">  <span class="p">&#8211;&#8211;h1&#8211;color</span>: var<span class="pr">(</span><span class="p">&#8211;&#8211;color&#8211;black</span><span class="pr">)</span>;</div>
<div class="ln" style="top:712.38px;left:1174.5px">26</div>
<div class="cl" style="top:712.38px;left:1241.5px">  <span class="p">&#8211;&#8211;h2&#8211;color</span>: var<span class="pr">(</span><span class="p">&#8211;&#8211;color&#8211;black</span><span class="pr">)</span>;</div>
<div class="ln" style="top:730.49px;left:1174.5px">27</div>
<div class="cl" style="top:730.49px;left:1241.5px">  <span class="p">&#8211;&#8211;h3&#8211;color</span>: var<span class="pr">(</span><span class="p">&#8211;&#8211;color&#8211;black</span><span class="pr">)</span>;</div>
<div class="ln" style="top:748.61px;left:1174.5px">28</div>
<div class="cl" style="top:748.61px;left:1241.5px">  <span class="p">&#8211;&#8211;h4&#8211;color</span>: var<span class="pr">(</span><span class="p">&#8211;&#8211;color&#8211;black</span><span class="pr">)</span>;</div>
<div class="ln" style="top:766.72px;left:1174.5px">29</div>
<div class="cl" style="top:766.72px;left:1241.5px">  <span class="p">&#8211;&#8211;h5&#8211;color</span>: var<span class="pr">(</span><span class="p">&#8211;&#8211;color&#8211;black</span><span class="pr">)</span>;</div>
<div class="ln" style="top:784.83px;left:1174.5px">30</div>
<div class="cl" style="top:784.83px;left:1241.5px">  <span class="p">&#8211;&#8211;h6&#8211;color</span>: var<span class="pr">(</span><span class="p">&#8211;&#8211;color&#8211;black</span><span class="pr">)</span>;</div>
<div class="ln" style="top:802.95px;left:1174.5px">31</div>
<div class="cl" style="top:802.95px;left:1241.5px">  <span class="p">&#8211;&#8211;muted&#8211;color</span>: var<span class="pr">(</span><span class="p">&#8211;&#8211;color&#8211;text&#8211;secondary</span><span class="pr">)</span>;</div>
<div class="ln" style="top:821.06px;left:1174.5px">32</div>
<div class="cl" style="top:821.06px;left:1241.5px">  <span class="p">&#8211;&#8211;muted&#8211;border&#8211;color</span>: var<span class="pr">(</span><span class="p">&#8211;&#8211;color&#8211;border</span><span class="pr">)</span>;</div>
<div class="ln" style="top:839.18px;left:1174.5px">33</div>
<div class="ln" style="top:857.29px;left:1174.5px">34</div>
<div class="cl" style="top:857.29px;left:1241.5px">  <span class="c">/<b class="ast">*</b> Tipografía <b class="ast">*</b>/</span></div>
<div class="ln" style="top:875.41px;left:1174.5px">35</div>
<div class="cl" style="top:875.41px;left:1241.5px">  <span class="p">&#8211;&#8211;font&#8211;family</span>: var<span class="pr">(</span><span class="p">&#8211;&#8211;font&#8211;base</span><span class="pr">)</span>;</div>
<div class="ln" style="top:893.52px;left:1174.5px">36</div>
<div class="cl" style="top:893.52px;left:1241.5px">  <span class="p">&#8211;&#8211;line&#8211;height</span>: var<span class="pr">(</span><span class="p">&#8211;&#8211;line&#8211;height&#8211;normal</span><span class="pr">)</span>;</div>
<div class="ln" style="top:911.64px;left:1174.5px">37</div>
<div class="cl" style="top:911.64px;left:1241.5px">  <span class="p">&#8211;&#8211;font&#8211;weight</span>: var<span class="pr">(</span><span class="p">&#8211;&#8211;font&#8211;weight&#8211;regular</span><span class="pr">)</span>;</div>
<div class="ln" style="top:929.75px;left:1174.5px">38</div>
<div class="cl" style="top:929.75px;left:1241.5px">  <span class="p">&#8211;&#8211;font&#8211;size</span>: var<span class="pr">(</span><span class="p">&#8211;&#8211;font&#8211;size&#8211;md</span><span class="pr">)</span>;</div>
<div class="ln" style="top:947.87px;left:1174.5px">39</div>
<div class="ln" style="top:965.98px;left:1174.5px">40</div>
<div class="cl" style="top:965.98px;left:1241.5px">  <span class="p">&#8211;&#8211;h1&#8211;font&#8211;size</span>: var<span class="pr">(</span><span class="p">&#8211;&#8211;font&#8211;size&#8211;xxxl</span><span class="pr">)</span>;</div>
<div class="ln" style="top:984.10px;left:1174.5px">41</div>
<div class="cl" style="top:984.10px;left:1241.5px">  <span class="p">&#8211;&#8211;h2&#8211;font&#8211;size</span>: var<span class="pr">(</span><span class="p">&#8211;&#8211;font&#8211;size&#8211;xxl</span><span class="pr">)</span>;</div>
<div class="ln" style="top:1002.21px;left:1174.5px">42</div>
<div class="cl" style="top:1002.21px;left:1241.5px">  <span class="p">&#8211;&#8211;h3&#8211;font&#8211;size</span>: var<span class="pr">(</span><span class="p">&#8211;&#8211;font&#8211;size&#8211;xl</span><span class="pr">)</span>;</div>
<div class="ln" style="top:1020.33px;left:1174.5px">43</div>
<div class="cl" style="top:1020.33px;left:1241.5px">  <span class="p">&#8211;&#8211;h4&#8211;font&#8211;size</span>: var<span class="pr">(</span><span class="p">&#8211;&#8211;font&#8211;size&#8211;lg</span><span class="pr">)</span>;</div>
<div class="ln" style="top:1038.44px;left:1174.5px">44</div>
<div class="cl" style="top:1038.44px;left:1241.5px">  <span class="p">&#8211;&#8211;h5&#8211;font&#8211;size</span>: var<span class="pr">(</span><span class="p">&#8211;&#8211;font&#8211;size&#8211;md</span><span class="pr">)</span>;</div>
<div class="ln" style="top:1056.56px;left:1174.5px">45</div>
<div class="cl" style="top:1056.56px;left:1241.5px">  <span class="p">&#8211;&#8211;h6&#8211;font&#8211;size</span>: var<span class="pr">(</span><span class="p">&#8211;&#8211;font&#8211;size&#8211;sm</span><span class="pr">)</span>;</div>
<div class="ln" style="top:1074.67px;left:1174.5px">46</div>
<div class="ln" style="top:1092.79px;left:1174.5px">47</div>
<div class="cl" style="top:1092.79px;left:1241.5px">  <span class="p">&#8211;&#8211;heading&#8211;font&#8211;family</span>: var<span class="pr">(</span><span class="p">&#8211;&#8211;font&#8211;base</span><span class="pr">)</span>;</div>
<div class="ln" style="top:1110.90px;left:1174.5px">48</div>
<div class="cl" style="top:1110.90px;left:1241.5px">  <span class="p">&#8211;&#8211;heading&#8211;font&#8211;weight</span>: var<span class="pr">(</span><span class="p">&#8211;&#8211;font&#8211;weight&#8211;bold</span><span class="pr">)</span>;</div>
<div class="ln" style="top:1129.02px;left:1174.5px">49</div>
<div class="ln" style="top:1147.13px;left:1174.5px">50</div>
<div class="cl" style="top:1147.13px;left:1241.5px">  <span class="c">/<b class="ast">*</b> Espaciado <b class="ast">*</b>/</span></div>
<div class="ln" style="top:1165.25px;left:1174.5px">51</div>
<div class="cl" style="top:1165.25px;left:1241.5px">  <span class="p">&#8211;&#8211;spacing</span>: <span class="n">1rem</span>;</div>
<div class="ln" style="top:1183.36px;left:1174.5px">52</div>
<div class="cl" style="top:1183.36px;left:1241.5px">  <span class="p">&#8211;&#8211;typography&#8211;spacing&#8211;vertical</span>: var<span class="pr">(</span><span class="p">&#8211;&#8211;spacing&#8211;md</span><span class="pr">)</span>;</div>
<div class="ln" style="top:1201.48px;left:1174.5px">53</div>
<div class="cl" style="top:1201.48px;left:1241.5px">  <span class="p">&#8211;&#8211;form&#8211;element&#8211;spacing&#8211;vertical</span>: var<span class="pr">(</span><span class="p">&#8211;&#8211;spacing&#8211;sm</span><span class="pr">)</span>;</div>
<div class="ln" style="top:1219.59px;left:1174.5px">54</div>
<div class="cl" style="top:1219.59px;left:1241.5px">  <span class="p">&#8211;&#8211;form&#8211;element&#8211;spacing&#8211;horizontal</span>: var<span class="pr">(</span><span class="p">&#8211;&#8211;spacing&#8211;md</span><span class="pr">)</span>;</div>
<div class="ln" style="top:1237.71px;left:1174.5px">55</div>
<div class="cl" style="top:1237.71px;left:1241.5px">  <span class="p">&#8211;&#8211;block&#8211;spacing&#8211;vertical</span>: var<span class="pr">(</span><span class="p">&#8211;&#8211;spacing&#8211;lg</span><span class="pr">)</span>;</div>
<div class="ln" style="top:1255.82px;left:1174.5px">56</div>
<div class="cl" style="top:1255.82px;left:1241.5px">  <span class="p">&#8211;&#8211;block&#8211;spacing&#8211;horizontal</span>: var<span class="pr">(</span><span class="p">&#8211;&#8211;spacing&#8211;lg</span><span class="pr">)</span>;</div>
<div class="ln" style="top:1273.94px;left:1174.5px">57</div>
<div class="abs" style="left:1745px;top:259px;width:64px;height:2.5px;background:#3a3d41"></div>
<div class="mini" style="left:1746px;top:260px;transform:scale(0.1143);"><div><span class="sc">:</span><span class="sel">root</span> <span class="br">{</span></div><div>  <span class="c">/* Colores para tema claro */</span></div><div>  <span class="p">--primary</span>: var<span class="pr">(</span><span class="p">--color-gen</span><span class="pr">)</span>;</div><div>  <span class="p">--primary-hover</span>: var<span class="pr">(</span><span class="p">--color-gen-dark</span><span class="pr">)</span>;</div><div>  <span class="p">--primary-focus</span>: <i class="swm"></i>rgba<span class="pr">(</span><span class="n">5</span>, <span class="n">7</span>, <span class="n">57</span>, <span class="n">0.125</span><span class="pr">)</span>;</div><div>  <span class="p">--primary-inverse</span>: var<span class="pr">(</span><span class="p">--color-white</span><span class="pr">)</span>;</div><div> </div><div>  <span class="p">--secondary</span>: var<span class="pr">(</span><span class="p">--color-highlight</span><span class="pr">)</span>;</div><div>  <span class="p">--secondary-hover</span>: <i class="swm"></i>#e5bc2f;</div><div>  <span class="p">--secondary-focus</span>: <i class="swm"></i>rgba<span class="pr">(</span><span class="n">255</span>, <span class="n">212</span>, <span class="n">55</span>, <span class="n">0.125</span><span class="pr">)</span>;</div><div>  <span class="p">--secondary-inverse</span>: var<span class="pr">(</span><span class="p">--color-black</span><span class="pr">)</span>;</div><div> </div><div>  <span class="p">--accent</span>: var<span class="pr">(</span><span class="p">--color-tu-voz</span><span class="pr">)</span>;</div><div>  <span class="p">--accent-hover</span>: <i class="swm"></i>#c81f29;</div><div>  <span class="p">--accent-focus</span>: <i class="swm"></i>rgba<span class="pr">(</span><span class="n">228</span>, <span class="n">36</span>, <span class="n">47</span>, <span class="n">0.125</span><span class="pr">)</span>;</div><div>  <span class="p">--accent-inverse</span>: var<span class="pr">(</span><span class="p">--color-white</span><span class="pr">)</span>;</div><div> </div><div>  <span class="c">/* === COLORES DE FONDO PICO TEMA CLARO === */</span></div><div>  <span class="p">--pico-background-color</span>: var<span class="pr">(</span><span class="p">--color-background</span><span class="pr">)</span> <span class="imp">!important</span>;</div><div>  <span class="p">--pico-card-background-color</span>: var<span class="pr">(</span><span class="p">--color-white</span><span class="pr">)</span> <span class="imp">!important</span>;</div><div>  <span class="p">--pico-card-sectioning-background-color</span>: <i class="swm"></i>#f1f3f4 <span class="imp">!important</span>;</div><div> </div><div>  <span class="c">/* Colores de texto para tema claro */</span></div><div>  <span class="p">--color</span>: var<span class="pr">(</span><span class="p">--color-text-primary</span><span class="pr">)</span>;</div><div>  <span class="p">--h1-color</span>: var<span class="pr">(</span><span class="p">--color-black</span><span class="pr">)</span>;</div><div>  <span class="p">--h2-color</span>: var<span class="pr">(</span><span class="p">--color-black</span><span class="pr">)</span>;</div><div>  <span class="p">--h3-color</span>: var<span class="pr">(</span><span class="p">--color-black</span><span class="pr">)</span>;</div><div>  <span class="p">--h4-color</span>: var<span class="pr">(</span><span class="p">--color-black</span><span class="pr">)</span>;</div><div>  <span class="p">--h5-color</span>: var<span class="pr">(</span><span class="p">--color-black</span><span class="pr">)</span>;</div><div>  <span class="p">--h6-color</span>: var<span class="pr">(</span><span class="p">--color-black</span><span class="pr">)</span>;</div><div>  <span class="p">--muted-color</span>: var<span class="pr">(</span><span class="p">--color-text-secondary</span><span class="pr">)</span>;</div><div>  <span class="p">--muted-border-color</span>: var<span class="pr">(</span><span class="p">--color-border</span><span class="pr">)</span>;</div><div> </div><div>  <span class="c">/* Tipografía */</span></div><div>  <span class="p">--font-family</span>: var<span class="pr">(</span><span class="p">--font-base</span><span class="pr">)</span>;</div><div>  <span class="p">--line-height</span>: var<span class="pr">(</span><span class="p">--line-height-normal</span><span class="pr">)</span>;</div><div>  <span class="p">--font-weight</span>: var<span class="pr">(</span><span class="p">--font-weight-regular</span><span class="pr">)</span>;</div><div>  <span class="p">--font-size</span>: var<span class="pr">(</span><span class="p">--font-size-md</span><span class="pr">)</span>;</div><div> </div><div>  <span class="p">--h1-font-size</span>: var<span class="pr">(</span><span class="p">--font-size-xxxl</span><span class="pr">)</span>;</div><div>  <span class="p">--h2-font-size</span>: var<span class="pr">(</span><span class="p">--font-size-xxl</span><span class="pr">)</span>;</div><div>  <span class="p">--h3-font-size</span>: var<span class="pr">(</span><span class="p">--font-size-xl</span><span class="pr">)</span>;</div><div>  <span class="p">--h4-font-size</span>: var<span class="pr">(</span><span class="p">--font-size-lg</span><span class="pr">)</span>;</div><div>  <span class="p">--h5-font-size</span>: var<span class="pr">(</span><span class="p">--font-size-md</span><span class="pr">)</span>;</div><div>  <span class="p">--h6-font-size</span>: var<span class="pr">(</span><span class="p">--font-size-sm</span><span class="pr">)</span>;</div><div> </div><div>  <span class="p">--heading-font-family</span>: var<span class="pr">(</span><span class="p">--font-base</span><span class="pr">)</span>;</div><div>  <span class="p">--heading-font-weight</span>: var<span class="pr">(</span><span class="p">--font-weight-bold</span><span class="pr">)</span>;</div><div> </div><div>  <span class="c">/* Espaciado */</span></div><div>  <span class="p">--spacing</span>: <span class="n">1rem</span>;</div><div>  <span class="p">--typography-spacing-vertical</span>: var<span class="pr">(</span><span class="p">--spacing-md</span><span class="pr">)</span>;</div><div>  <span class="p">--form-element-spacing-vertical</span>: var<span class="pr">(</span><span class="p">--spacing-sm</span><span class="pr">)</span>;</div><div>  <span class="p">--form-element-spacing-horizontal</span>: var<span class="pr">(</span><span class="p">--spacing-md</span><span class="pr">)</span>;</div><div>  <span class="p">--block-spacing-vertical</span>: var<span class="pr">(</span><span class="p">--spacing-lg</span><span class="pr">)</span>;</div><div>  <span class="p">--block-spacing-horizontal</span>: var<span class="pr">(</span><span class="p">--spacing-lg</span><span class="pr">)</span>;</div><div> </div><div><span class="sc">:</span><span class="sel">root</span> <span class="br">{</span></div><div>  <span class="c">/* Colores para tema claro */</span></div><div>  <span class="p">--primary</span>: var<span class="pr">(</span><span class="p">--color-gen</span><span class="pr">)</span>;</div><div>  <span class="p">--primary-hover</span>: var<span class="pr">(</span><span class="p">--color-gen-dark</span><span class="pr">)</span>;</div><div>  <span class="p">--primary-focus</span>: <i class="swm"></i>rgba<span class="pr">(</span><span class="n">5</span>, <span class="n">7</span>, <span class="n">57</span>, <span class="n">0.125</span><span class="pr">)</span>;</div><div>  <span class="p">--primary-inverse</span>: var<span class="pr">(</span><span class="p">--color-white</span><span class="pr">)</span>;</div><div> </div><div>  <span class="p">--secondary</span>: var<span class="pr">(</span><span class="p">--color-highlight</span><span class="pr">)</span>;</div><div>  <span class="p">--secondary-hover</span>: <i class="swm"></i>#e5bc2f;</div><div>  <span class="p">--secondary-focus</span>: <i class="swm"></i>rgba<span class="pr">(</span><span class="n">255</span>, <span class="n">212</span>, <span class="n">55</span>, <span class="n">0.125</span><span class="pr">)</span>;</div><div>  <span class="p">--secondary-inverse</span>: var<span class="pr">(</span><span class="p">--color-black</span><span class="pr">)</span>;</div><div> </div><div>  <span class="p">--accent</span>: var<span class="pr">(</span><span class="p">--color-tu-voz</span><span class="pr">)</span>;</div><div>  <span class="p">--accent-hover</span>: <i class="swm"></i>#c81f29;</div><div>  <span class="p">--accent-focus</span>: <i class="swm"></i>rgba<span class="pr">(</span><span class="n">228</span>, <span class="n">36</span>, <span class="n">47</span>, <span class="n">0.125</span><span class="pr">)</span>;</div><div>  <span class="p">--accent-inverse</span>: var<span class="pr">(</span><span class="p">--color-white</span><span class="pr">)</span>;</div><div> </div><div>  <span class="c">/* === COLORES DE FONDO PICO TEMA CLARO === */</span></div><div>  <span class="p">--pico-background-color</span>: var<span class="pr">(</span><span class="p">--color-background</span><span class="pr">)</span> <span class="imp">!important</span>;</div><div>  <span class="p">--pico-card-background-color</span>: var<span class="pr">(</span><span class="p">--color-white</span><span class="pr">)</span> <span class="imp">!important</span>;</div><div>  <span class="p">--pico-card-sectioning-background-color</span>: <i class="swm"></i>#f1f3f4 <span class="imp">!important</span>;</div><div> </div><div>  <span class="c">/* Colores de texto para tema claro */</span></div><div>  <span class="p">--color</span>: var<span class="pr">(</span><span class="p">--color-text-primary</span><span class="pr">)</span>;</div><div>  <span class="p">--h1-color</span>: var<span class="pr">(</span><span class="p">--color-black</span><span class="pr">)</span>;</div><div>  <span class="p">--h2-color</span>: var<span class="pr">(</span><span class="p">--color-black</span><span class="pr">)</span>;</div><div>  <span class="p">--h3-color</span>: var<span class="pr">(</span><span class="p">--color-black</span><span class="pr">)</span>;</div><div>  <span class="p">--h4-color</span>: var<span class="pr">(</span><span class="p">--color-black</span><span class="pr">)</span>;</div><div>  <span class="p">--h5-color</span>: var<span class="pr">(</span><span class="p">--color-black</span><span class="pr">)</span>;</div><div>  <span class="p">--h6-color</span>: var<span class="pr">(</span><span class="p">--color-black</span><span class="pr">)</span>;</div><div>  <span class="p">--muted-color</span>: var<span class="pr">(</span><span class="p">--color-text-secondary</span><span class="pr">)</span>;</div><div>  <span class="p">--muted-border-color</span>: var<span class="pr">(</span><span class="p">--color-border</span><span class="pr">)</span>;</div><div> </div><div>  <span class="c">/* Tipografía */</span></div><div>  <span class="p">--font-family</span>: var<span class="pr">(</span><span class="p">--font-base</span><span class="pr">)</span>;</div><div>  <span class="p">--line-height</span>: var<span class="pr">(</span><span class="p">--line-height-normal</span><span class="pr">)</span>;</div><div>  <span class="p">--font-weight</span>: var<span class="pr">(</span><span class="p">--font-weight-regular</span><span class="pr">)</span>;</div><div>  <span class="p">--font-size</span>: var<span class="pr">(</span><span class="p">--font-size-md</span><span class="pr">)</span>;</div><div> </div><div>  <span class="p">--h1-font-size</span>: var<span class="pr">(</span><span class="p">--font-size-xxxl</span><span class="pr">)</span>;</div><div>  <span class="p">--h2-font-size</span>: var<span class="pr">(</span><span class="p">--font-size-xxl</span><span class="pr">)</span>;</div><div>  <span class="p">--h3-font-size</span>: var<span class="pr">(</span><span class="p">--font-size-xl</span><span class="pr">)</span>;</div><div>  <span class="p">--h4-font-size</span>: var<span class="pr">(</span><span class="p">--font-size-lg</span><span class="pr">)</span>;</div><div>  <span class="p">--h5-font-size</span>: var<span class="pr">(</span><span class="p">--font-size-md</span><span class="pr">)</span>;</div><div>  <span class="p">--h6-font-size</span>: var<span class="pr">(</span><span class="p">--font-size-sm</span><span class="pr">)</span>;</div><div> </div><div>  <span class="p">--heading-font-family</span>: var<span class="pr">(</span><span class="p">--font-base</span><span class="pr">)</span>;</div><div>  <span class="p">--heading-font-weight</span>: var<span class="pr">(</span><span class="p">--font-weight-bold</span><span class="pr">)</span>;</div><div> </div><div>  <span class="c">/* Espaciado */</span></div><div>  <span class="p">--spacing</span>: <span class="n">1rem</span>;</div><div>  <span class="p">--typography-spacing-vertical</span>: var<span class="pr">(</span><span class="p">--spacing-md</span><span class="pr">)</span>;</div><div>  <span class="p">--form-element-spacing-vertical</span>: var<span class="pr">(</span><span class="p">--spacing-sm</span><span class="pr">)</span>;</div><div>  <span class="p">--form-element-spacing-horizontal</span>: var<span class="pr">(</span><span class="p">--spacing-md</span><span class="pr">)</span>;</div><div>  <span class="p">--block-spacing-vertical</span>: var<span class="pr">(</span><span class="p">--spacing-lg</span><span class="pr">)</span>;</div><div>  <span class="p">--block-spacing-horizontal</span>: var<span class="pr">(</span><span class="p">--spacing-lg</span><span class="pr">)</span>;</div><div> </div><div><span class="sc">:</span><span class="sel">root</span> <span class="br">{</span></div><div>  <span class="c">/* Colores para tema claro */</span></div><div>  <span class="p">--primary</span>: var<span class="pr">(</span><span class="p">--color-gen</span><span class="pr">)</span>;</div><div>  <span class="p">--primary-hover</span>: var<span class="pr">(</span><span class="p">--color-gen-dark</span><span class="pr">)</span>;</div><div>  <span class="p">--primary-focus</span>: <i class="swm"></i>rgba<span class="pr">(</span><span class="n">5</span>, <span class="n">7</span>, <span class="n">57</span>, <span class="n">0.125</span><span class="pr">)</span>;</div><div>  <span class="p">--primary-inverse</span>: var<span class="pr">(</span><span class="p">--color-white</span><span class="pr">)</span>;</div><div> </div><div>  <span class="p">--secondary</span>: var<span class="pr">(</span><span class="p">--color-highlight</span><span class="pr">)</span>;</div><div>  <span class="p">--secondary-hover</span>: <i class="swm"></i>#e5bc2f;</div><div>  <span class="p">--secondary-focus</span>: <i class="swm"></i>rgba<span class="pr">(</span><span class="n">255</span>, <span class="n">212</span>, <span class="n">55</span>, <span class="n">0.125</span><span class="pr">)</span>;</div><div>  <span class="p">--secondary-inverse</span>: var<span class="pr">(</span><span class="p">--color-black</span><span class="pr">)</span>;</div><div> </div><div>  <span class="p">--accent</span>: var<span class="pr">(</span><span class="p">--color-tu-voz</span><span class="pr">)</span>;</div><div>  <span class="p">--accent-hover</span>: <i class="swm"></i>#c81f29;</div><div>  <span class="p">--accent-focus</span>: <i class="swm"></i>rgba<span class="pr">(</span><span class="n">228</span>, <span class="n">36</span>, <span class="n">47</span>, <span class="n">0.125</span><span class="pr">)</span>;</div><div>  <span class="p">--accent-inverse</span>: var<span class="pr">(</span><span class="p">--color-white</span><span class="pr">)</span>;</div><div> </div><div>  <span class="c">/* === COLORES DE FONDO PICO TEMA CLARO === */</span></div><div>  <span class="p">--pico-background-color</span>: var<span class="pr">(</span><span class="p">--color-background</span><span class="pr">)</span> <span class="imp">!important</span>;</div><div>  <span class="p">--pico-card-background-color</span>: var<span class="pr">(</span><span class="p">--color-white</span><span class="pr">)</span> <span class="imp">!important</span>;</div><div>  <span class="p">--pico-card-sectioning-background-color</span>: <i class="swm"></i>#f1f3f4 <span class="imp">!important</span>;</div><div> </div><div>  <span class="c">/* Colores de texto para tema claro */</span></div><div>  <span class="p">--color</span>: var<span class="pr">(</span><span class="p">--color-text-primary</span><span class="pr">)</span>;</div><div>  <span class="p">--h1-color</span>: var<span class="pr">(</span><span class="p">--color-black</span><span class="pr">)</span>;</div><div>  <span class="p">--h2-color</span>: var<span class="pr">(</span><span class="p">--color-black</span><span class="pr">)</span>;</div><div>  <span class="p">--h3-color</span>: var<span class="pr">(</span><span class="p">--color-black</span><span class="pr">)</span>;</div><div>  <span class="p">--h4-color</span>: var<span class="pr">(</span><span class="p">--color-black</span><span class="pr">)</span>;</div><div>  <span class="p">--h5-color</span>: var<span class="pr">(</span><span class="p">--color-black</span><span class="pr">)</span>;</div><div>  <span class="p">--h6-color</span>: var<span class="pr">(</span><span class="p">--color-black</span><span class="pr">)</span>;</div><div>  <span class="p">--muted-color</span>: var<span class="pr">(</span><span class="p">--color-text-secondary</span><span class="pr">)</span>;</div><div>  <span class="p">--muted-border-color</span>: var<span class="pr">(</span><span class="p">--color-border</span><span class="pr">)</span>;</div><div> </div><div>  <span class="c">/* Tipografía */</span></div><div>  <span class="p">--font-family</span>: var<span class="pr">(</span><span class="p">--font-base</span><span class="pr">)</span>;</div><div>  <span class="p">--line-height</span>: var<span class="pr">(</span><span class="p">--line-height-normal</span><span class="pr">)</span>;</div><div>  <span class="p">--font-weight</span>: var<span class="pr">(</span><span class="p">--font-weight-regular</span><span class="pr">)</span>;</div><div>  <span class="p">--font-size</span>: var<span class="pr">(</span><span class="p">--font-size-md</span><span class="pr">)</span>;</div><div> </div><div>  <span class="p">--h1-font-size</span>: var<span class="pr">(</span><span class="p">--font-size-xxxl</span><span class="pr">)</span>;</div><div>  <span class="p">--h2-font-size</span>: var<span class="pr">(</span><span class="p">--font-size-xxl</span><span class="pr">)</span>;</div><div>  <span class="p">--h3-font-size</span>: var<span class="pr">(</span><span class="p">--font-size-xl</span><span class="pr">)</span>;</div><div>  <span class="p">--h4-font-size</span>: var<span class="pr">(</span><span class="p">--font-size-lg</span><span class="pr">)</span>;</div><div>  <span class="p">--h5-font-size</span>: var<span class="pr">(</span><span class="p">--font-size-md</span><span class="pr">)</span>;</div><div>  <span class="p">--h6-font-size</span>: var<span class="pr">(</span><span class="p">--font-size-sm</span><span class="pr">)</span>;</div><div> </div><div>  <span class="p">--heading-font-family</span>: var<span class="pr">(</span><span class="p">--font-base</span><span class="pr">)</span>;</div><div>  <span class="p">--heading-font-weight</span>: var<span class="pr">(</span><span class="p">--font-weight-bold</span><span class="pr">)</span>;</div><div> </div><div>  <span class="c">/* Espaciado */</span></div><div>  <span class="p">--spacing</span>: <span class="n">1rem</span>;</div><div>  <span class="p">--typography-spacing-vertical</span>: var<span class="pr">(</span><span class="p">--spacing-md</span><span class="pr">)</span>;</div><div>  <span class="p">--form-element-spacing-vertical</span>: var<span class="pr">(</span><span class="p">--spacing-sm</span><span class="pr">)</span>;</div><div>  <span class="p">--form-element-spacing-horizontal</span>: var<span class="pr">(</span><span class="p">--spacing-md</span><span class="pr">)</span>;</div><div>  <span class="p">--block-spacing-vertical</span>: var<span class="pr">(</span><span class="p">--spacing-lg</span><span class="pr">)</span>;</div><div>  <span class="p">--block-spacing-horizontal</span>: var<span class="pr">(</span><span class="p">--spacing-lg</span><span class="pr">)</span>;</div><div> </div><div><span class="sc">:</span><span class="sel">root</span> <span class="br">{</span></div><div>  <span class="c">/* Colores para tema claro */</span></div><div>  <span class="p">--primary</span>: var<span class="pr">(</span><span class="p">--color-gen</span><span class="pr">)</span>;</div><div>  <span class="p">--primary-hover</span>: var<span class="pr">(</span><span class="p">--color-gen-dark</span><span class="pr">)</span>;</div><div>  <span class="p">--primary-focus</span>: <i class="swm"></i>rgba<span class="pr">(</span><span class="n">5</span>, <span class="n">7</span>, <span class="n">57</span>, <span class="n">0.125</span><span class="pr">)</span>;</div><div>  <span class="p">--primary-inverse</span>: var<span class="pr">(</span><span class="p">--color-white</span><span class="pr">)</span>;</div><div> </div><div>  <span class="p">--secondary</span>: var<span class="pr">(</span><span class="p">--color-highlight</span><span class="pr">)</span>;</div><div>  <span class="p">--secondary-hover</span>: <i class="swm"></i>#e5bc2f;</div><div>  <span class="p">--secondary-focus</span>: <i class="swm"></i>rgba<span class="pr">(</span><span class="n">255</span>, <span class="n">212</span>, <span class="n">55</span>, <span class="n">0.125</span><span class="pr">)</span>;</div><div>  <span class="p">--secondary-inverse</span>: var<span class="pr">(</span><span class="p">--color-black</span><span class="pr">)</span>;</div><div> </div><div>  <span class="p">--accent</span>: var<span class="pr">(</span><span class="p">--color-tu-voz</span><span class="pr">)</span>;</div><div>  <span class="p">--accent-hover</span>: <i class="swm"></i>#c81f29;</div><div>  <span class="p">--accent-focus</span>: <i class="swm"></i>rgba<span class="pr">(</span><span class="n">228</span>, <span class="n">36</span>, <span class="n">47</span>, <span class="n">0.125</span><span class="pr">)</span>;</div><div>  <span class="p">--accent-inverse</span>: var<span class="pr">(</span><span class="p">--color-white</span><span class="pr">)</span>;</div><div> </div><div>  <span class="c">/* === COLORES DE FONDO PICO TEMA CLARO === */</span></div><div>  <span class="p">--pico-background-color</span>: var<span class="pr">(</span><span class="p">--color-background</span><span class="pr">)</span> <span class="imp">!important</span>;</div><div>  <span class="p">--pico-card-background-color</span>: var<span class="pr">(</span><span class="p">--color-white</span><span class="pr">)</span> <span class="imp">!important</span>;</div><div>  <span class="p">--pico-card-sectioning-background-color</span>: <i class="swm"></i>#f1f3f4 <span class="imp">!important</span>;</div><div> </div><div>  <span class="c">/* Colores de texto para tema claro */</span></div><div>  <span class="p">--color</span>: var<span class="pr">(</span><span class="p">--color-text-primary</span><span class="pr">)</span>;</div><div>  <span class="p">--h1-color</span>: var<span class="pr">(</span><span class="p">--color-black</span><span class="pr">)</span>;</div><div>  <span class="p">--h2-color</span>: var<span class="pr">(</span><span class="p">--color-black</span><span class="pr">)</span>;</div><div>  <span class="p">--h3-color</span>: var<span class="pr">(</span><span class="p">--color-black</span><span class="pr">)</span>;</div><div>  <span class="p">--h4-color</span>: var<span class="pr">(</span><span class="p">--color-black</span><span class="pr">)</span>;</div><div>  <span class="p">--h5-color</span>: var<span class="pr">(</span><span class="p">--color-black</span><span class="pr">)</span>;</div><div>  <span class="p">--h6-color</span>: var<span class="pr">(</span><span class="p">--color-black</span><span class="pr">)</span>;</div><div>  <span class="p">--muted-color</span>: var<span class="pr">(</span><span class="p">--color-text-secondary</span><span class="pr">)</span>;</div><div>  <span class="p">--muted-border-color</span>: var<span class="pr">(</span><span class="p">--color-border</span><span class="pr">)</span>;</div><div> </div><div>  <span class="c">/* Tipografía */</span></div><div>  <span class="p">--font-family</span>: var<span class="pr">(</span><span class="p">--font-base</span><span class="pr">)</span>;</div><div>  <span class="p">--line-height</span>: var<span class="pr">(</span><span class="p">--line-height-normal</span><span class="pr">)</span>;</div><div>  <span class="p">--font-weight</span>: var<span class="pr">(</span><span class="p">--font-weight-regular</span><span class="pr">)</span>;</div><div>  <span class="p">--font-size</span>: var<span class="pr">(</span><span class="p">--font-size-md</span><span class="pr">)</span>;</div><div> </div><div>  <span class="p">--h1-font-size</span>: var<span class="pr">(</span><span class="p">--font-size-xxxl</span><span class="pr">)</span>;</div><div>  <span class="p">--h2-font-size</span>: var<span class="pr">(</span><span class="p">--font-size-xxl</span><span class="pr">)</span>;</div><div>  <span class="p">--h3-font-size</span>: var<span class="pr">(</span><span class="p">--font-size-xl</span><span class="pr">)</span>;</div><div>  <span class="p">--h4-font-size</span>: var<span class="pr">(</span><span class="p">--font-size-lg</span><span class="pr">)</span>;</div><div>  <span class="p">--h5-font-size</span>: var<span class="pr">(</span><span class="p">--font-size-md</span><span class="pr">)</span>;</div><div>  <span class="p">--h6-font-size</span>: var<span class="pr">(</span><span class="p">--font-size-sm</span><span class="pr">)</span>;</div><div> </div><div>  <span class="p">--heading-font-family</span>: var<span class="pr">(</span><span class="p">--font-base</span><span class="pr">)</span>;</div><div>  <span class="p">--heading-font-weight</span>: var<span class="pr">(</span><span class="p">--font-weight-bold</span><span class="pr">)</span>;</div><div> </div><div>  <span class="c">/* Espaciado */</span></div><div>  <span class="p">--spacing</span>: <span class="n">1rem</span>;</div><div>  <span class="p">--typography-spacing-vertical</span>: var<span class="pr">(</span><span class="p">--spacing-md</span><span class="pr">)</span>;</div><div>  <span class="p">--form-element-spacing-vertical</span>: var<span class="pr">(</span><span class="p">--spacing-sm</span><span class="pr">)</span>;</div><div>  <span class="p">--form-element-spacing-horizontal</span>: var<span class="pr">(</span><span class="p">--spacing-md</span><span class="pr">)</span>;</div><div>  <span class="p">--block-spacing-vertical</span>: var<span class="pr">(</span><span class="p">--spacing-lg</span><span class="pr">)</span>;</div><div>  <span class="p">--block-spacing-horizontal</span>: var<span class="pr">(</span><span class="p">--spacing-lg</span><span class="pr">)</span>;</div><div> </div><div><span class="sc">:</span><span class="sel">root</span> <span class="br">{</span></div><div>  <span class="c">/* Colores para tema claro */</span></div><div>  <span class="p">--primary</span>: var<span class="pr">(</span><span class="p">--color-gen</span><span class="pr">)</span>;</div><div>  <span class="p">--primary-hover</span>: var<span class="pr">(</span><span class="p">--color-gen-dark</span><span class="pr">)</span>;</div><div>  <span class="p">--primary-focus</span>: <i class="swm"></i>rgba<span class="pr">(</span><span class="n">5</span>, <span class="n">7</span>, <span class="n">57</span>, <span class="n">0.125</span><span class="pr">)</span>;</div><div>  <span class="p">--primary-inverse</span>: var<span class="pr">(</span><span class="p">--color-white</span><span class="pr">)</span>;</div><div> </div><div>  <span class="p">--secondary</span>: var<span class="pr">(</span><span class="p">--color-highlight</span><span class="pr">)</span>;</div><div>  <span class="p">--secondary-hover</span>: <i class="swm"></i>#e5bc2f;</div><div>  <span class="p">--secondary-focus</span>: <i class="swm"></i>rgba<span class="pr">(</span><span class="n">255</span>, <span class="n">212</span>, <span class="n">55</span>, <span class="n">0.125</span><span class="pr">)</span>;</div><div>  <span class="p">--secondary-inverse</span>: var<span class="pr">(</span><span class="p">--color-black</span><span class="pr">)</span>;</div><div> </div><div>  <span class="p">--accent</span>: var<span class="pr">(</span><span class="p">--color-tu-voz</span><span class="pr">)</span>;</div><div>  <span class="p">--accent-hover</span>: <i class="swm"></i>#c81f29;</div><div>  <span class="p">--accent-focus</span>: <i class="swm"></i>rgba<span class="pr">(</span><span class="n">228</span>, <span class="n">36</span>, <span class="n">47</span>, <span class="n">0.125</span><span class="pr">)</span>;</div><div>  <span class="p">--accent-inverse</span>: var<span class="pr">(</span><span class="p">--color-white</span><span class="pr">)</span>;</div><div> </div><div>  <span class="c">/* === COLORES DE FONDO PICO TEMA CLARO === */</span></div><div>  <span class="p">--pico-background-color</span>: var<span class="pr">(</span><span class="p">--color-background</span><span class="pr">)</span> <span class="imp">!important</span>;</div><div>  <span class="p">--pico-card-background-color</span>: var<span class="pr">(</span><span class="p">--color-white</span><span class="pr">)</span> <span class="imp">!important</span>;</div><div>  <span class="p">--pico-card-sectioning-background-color</span>: <i class="swm"></i>#f1f3f4 <span class="imp">!important</span>;</div><div> </div><div>  <span class="c">/* Colores de texto para tema claro */</span></div><div>  <span class="p">--color</span>: var<span class="pr">(</span><span class="p">--color-text-primary</span><span class="pr">)</span>;</div><div>  <span class="p">--h1-color</span>: var<span class="pr">(</span><span class="p">--color-black</span><span class="pr">)</span>;</div><div>  <span class="p">--h2-color</span>: var<span class="pr">(</span><span class="p">--color-black</span><span class="pr">)</span>;</div><div>  <span class="p">--h3-color</span>: var<span class="pr">(</span><span class="p">--color-black</span><span class="pr">)</span>;</div><div>  <span class="p">--h4-color</span>: var<span class="pr">(</span><span class="p">--color-black</span><span class="pr">)</span>;</div><div>  <span class="p">--h5-color</span>: var<span class="pr">(</span><span class="p">--color-black</span><span class="pr">)</span>;</div><div>  <span class="p">--h6-color</span>: var<span class="pr">(</span><span class="p">--color-black</span><span class="pr">)</span>;</div><div>  <span class="p">--muted-color</span>: var<span class="pr">(</span><span class="p">--color-text-secondary</span><span class="pr">)</span>;</div><div>  <span class="p">--muted-border-color</span>: var<span class="pr">(</span><span class="p">--color-border</span><span class="pr">)</span>;</div><div> </div><div>  <span class="c">/* Tipografía */</span></div><div>  <span class="p">--font-family</span>: var<span class="pr">(</span><span class="p">--font-base</span><span class="pr">)</span>;</div><div>  <span class="p">--line-height</span>: var<span class="pr">(</span><span class="p">--line-height-normal</span><span class="pr">)</span>;</div><div>  <span class="p">--font-weight</span>: var<span class="pr">(</span><span class="p">--font-weight-regular</span><span class="pr">)</span>;</div><div>  <span class="p">--font-size</span>: var<span class="pr">(</span><span class="p">--font-size-md</span><span class="pr">)</span>;</div><div> </div><div>  <span class="p">--h1-font-size</span>: var<span class="pr">(</span><span class="p">--font-size-xxxl</span><span class="pr">)</span>;</div><div>  <span class="p">--h2-font-size</span>: var<span class="pr">(</span><span class="p">--font-size-xxl</span><span class="pr">)</span>;</div><div>  <span class="p">--h3-font-size</span>: var<span class="pr">(</span><span class="p">--font-size-xl</span><span class="pr">)</span>;</div><div>  <span class="p">--h4-font-size</span>: var<span class="pr">(</span><span class="p">--font-size-lg</span><span class="pr">)</span>;</div><div>  <span class="p">--h5-font-size</span>: var<span class="pr">(</span><span class="p">--font-size-md</span><span class="pr">)</span>;</div><div>  <span class="p">--h6-font-size</span>: var<span class="pr">(</span><span class="p">--font-size-sm</span><span class="pr">)</span>;</div><div> </div><div>  <span class="p">--heading-font-family</span>: var<span class="pr">(</span><span class="p">--font-base</span><span class="pr">)</span>;</div><div>  <span class="p">--heading-font-weight</span>: var<span class="pr">(</span><span class="p">--font-weight-bold</span><span class="pr">)</span>;</div><div> </div><div>  <span class="c">/* Espaciado */</span></div><div>  <span class="p">--spacing</span>: <span class="n">1rem</span>;</div><div>  <span class="p">--typography-spacing-vertical</span>: var<span class="pr">(</span><span class="p">--spacing-md</span><span class="pr">)</span>;</div><div>  <span class="p">--form-element-spacing-vertical</span>: var<span class="pr">(</span><span class="p">--spacing-sm</span><span class="pr">)</span>;</div><div>  <span class="p">--form-element-spacing-horizontal</span>: var<span class="pr">(</span><span class="p">--spacing-md</span><span class="pr">)</span>;</div><div>  <span class="p">--block-spacing-vertical</span>: var<span class="pr">(</span><span class="p">--spacing-lg</span><span class="pr">)</span>;</div><div>  <span class="p">--block-spacing-horizontal</span>: var<span class="pr">(</span><span class="p">--spacing-lg</span><span class="pr">)</span>;</div><div> </div><div><span class="sc">:</span><span class="sel">root</span> <span class="br">{</span></div><div>  <span class="c">/* Colores para tema claro */</span></div><div>  <span class="p">--primary</span>: var<span class="pr">(</span><span class="p">--color-gen</span><span class="pr">)</span>;</div><div>  <span class="p">--primary-hover</span>: var<span class="pr">(</span><span class="p">--color-gen-dark</span><span class="pr">)</span>;</div><div>  <span class="p">--primary-focus</span>: <i class="swm"></i>rgba<span class="pr">(</span><span class="n">5</span>, <span class="n">7</span>, <span class="n">57</span>, <span class="n">0.125</span><span class="pr">)</span>;</div><div>  <span class="p">--primary-inverse</span>: var<span class="pr">(</span><span class="p">--color-white</span><span class="pr">)</span>;</div><div> </div><div>  <span class="p">--secondary</span>: var<span class="pr">(</span><span class="p">--color-highlight</span><span class="pr">)</span>;</div><div>  <span class="p">--secondary-hover</span>: <i class="swm"></i>#e5bc2f;</div><div>  <span class="p">--secondary-focus</span>: <i class="swm"></i>rgba<span class="pr">(</span><span class="n">255</span>, <span class="n">212</span>, <span class="n">55</span>, <span class="n">0.125</span><span class="pr">)</span>;</div><div>  <span class="p">--secondary-inverse</span>: var<span class="pr">(</span><span class="p">--color-black</span><span class="pr">)</span>;</div><div> </div><div>  <span class="p">--accent</span>: var<span class="pr">(</span><span class="p">--color-tu-voz</span><span class="pr">)</span>;</div><div>  <span class="p">--accent-hover</span>: <i class="swm"></i>#c81f29;</div><div>  <span class="p">--accent-focus</span>: <i class="swm"></i>rgba<span class="pr">(</span><span class="n">228</span>, <span class="n">36</span>, <span class="n">47</span>, <span class="n">0.125</span><span class="pr">)</span>;</div></div>
<div class="abs" style="left:1809.5px;top:259px;width:1px;height:1029px;background:#2a2a2a"></div>
<div class="abs" style="left:1809.5px;top:259px;width:13.5px;height:2px;background:#a8a8a8"></div>
<div class="abs" style="left:1813.5px;top:261px;width:5.5px;height:4.5px;background:#c9a3d6"></div>
<div class="abs" style="left:1813.5px;top:705px;width:5px;height:5px;background:#9a9a9a"></div>
<div class="abs" style="left:1813.5px;top:964.5px;width:5px;height:5px;background:#9a9a9a"></div>
<div class="abs" style="left:1813.5px;top:987px;width:5px;height:5px;background:#9a9a9a"></div>
<div class="abs" style="left:1813.5px;top:1008.5px;width:5px;height:5px;background:#9a9a9a"></div>
<div class="abs" style="left:1813.5px;top:1079px;width:5px;height:5px;background:#9a9a9a"></div>

<div class="abs" style="left:1822px;top:168px;width:1px;height:1120px;background:#4c4c4c"></div>
<!-- ============ STATUS BAR ============ -->
<div class="status"></div>
<svg class="ico" style="left:183.0px;top:1291.0px" width="16" height="16" viewBox="0 0 16 16" ><path d="M2.6 9.6l4 3.4-4 3.4M13.4 2.4l-4 3.4 4 3.4" fill="none" stroke="#ffffff" stroke-width="1.15"/></svg>
<svg class="ico" style="left:215.0px;top:1291.0px" width="16" height="16" viewBox="0 0 16 16" ><g fill="none" stroke="#ffffff" stroke-width="1.05"><circle cx="4" cy="3" r="1.8"/><circle cx="4" cy="13.2" r="1.8"/><path d="M4 4.8v6.6M4 9.2c0-2.6 6-1.6 6-4.4"/></g><circle cx="11.2" cy="11.6" r="3.6" fill="none" stroke="#ffffff" stroke-width="1.05"/><path d="M11.2 9.6v4M9.2 11.6h4M9.8 10.2l2.8 2.8M12.6 10.2l-2.8 2.8" stroke="#ffffff" stroke-width=".8"/></svg>
<div class="sb" style="left:234px;font-size:13px">feature/newsletter*</div>
<svg class="ico" style="left:349.5px;top:1291.0px" width="16" height="16" viewBox="0 0 16 16" ><g fill="none" stroke="#ffffff" stroke-width="1.05"><path d="M12.6 5.6A5 5 0 0 0 3.4 5M3.4 10.4a5 5 0 0 0 9.2.6"/><path d="M3 2.4v2.8h2.8M13 13.6v-2.8h-2.8"/></g></svg>
<svg class="ico" style="left:381.5px;top:1291.0px" width="16" height="16" viewBox="0 0 16 16" ><g fill="none" stroke="#ffffff" stroke-width="1.05"><circle cx="8" cy="8" r="6.4"/><path d="M5.5 5.5l5 5M10.5 5.5l-5 5"/></g></svg>
<div class="sb" style="left:400.5px;font-size:13px">0</div>
<svg class="ico" style="left:412.0px;top:1291.0px" width="16" height="16" viewBox="0 0 16 16" ><path d="M8 1.6L15 14.2H1z" fill="none" stroke="#ffffff" stroke-width="1.05" stroke-linejoin="round"/><path d="M8 5.8v4.4M8 11.6v1.2" stroke="#ffffff" stroke-width="1.1"/></svg>
<div class="sb" style="left:431px;font-size:13px">0</div>
<div class="abs" style="left:1294px;top:1289px;width:32px;height:21px;background:#1d3b64"></div>
<svg class="ico" style="left:1302.0px;top:1291.0px" width="16" height="16" viewBox="0 0 16 16" ><g fill="none" stroke="#ffffff" stroke-width="1.2"><circle cx="7" cy="7" r="5.4"/><path d="M11 11l3.8 3.8M7 4.4v5.2M4.4 7h5.2"/></g></svg>
<div class="sb" style="left:1334px;font-size:12.8px">Lín. 1, col. 1</div>
<div class="sb" style="left:1420px;font-size:12.8px">Espacios: 2</div>
<div class="sb" style="left:1502px;font-size:12.8px">UTF-8</div>
<div class="sb" style="left:1554px;font-size:12.8px">LF</div>
<div class="sb" style="left:1584px;font-size:12.8px">{ }</div>
<div class="sb" style="left:1606px;font-size:12.8px">CSS</div>
<svg class="ico" style="left:1646.5px;top:1290.5px" width="17" height="17" viewBox="0 0 16 16" ><g fill="none" stroke="#ffffff" stroke-width="1.2"><path d="M3.4 6.4c-1.4.6-2 1.8-2 3.4v1.2c0 1.6 3 3.4 6.6 3.4s6.6-1.8 6.6-3.4V9.8c0-1.6-.6-2.8-2-3.4"/><path d="M8 5.2C7 2 5.6 1.6 4 1.8 2.2 2 1.8 3.4 2.2 5c.4 1.6 2 2.2 3.6 2 1.2-.2 2-.8 2.2-1.8zM8 5.2c1-3.2 2.4-3.6 4-3.4 1.8.2 2.2 1.6 1.8 3.2-.4 1.6-2 2.2-3.6 2-1.2-.2-2-.8-2.2-1.8z"/></g><path d="M5.6 9.4v2M10.4 9.4v2" stroke="#ffffff" stroke-width="1.4"/></svg>
<svg class="ico" style="left:1678.5px;top:1291.0px" width="16" height="16" viewBox="0 0 16 16" ><path d="M1.4 13.6l2.6-6.4 2.6 6.4M2.4 11.4h3.2M6.8 13.6L10.4 3l3.8 10.6M8.2 10h4.6" fill="none" stroke="#ffffff" stroke-width="1.1"/></svg>
<div class="sb" style="left:1710px;font-size:13px">+</div>
<div class="sb" style="left:1734.5px;font-size:12.8px">91%</div>
<div class="sb" style="left:1777px;font-size:13px">-</div>
<svg class="ico" style="left:1799.0px;top:1291.0px" width="16" height="16" viewBox="0 0 16 16" ><g fill="none" stroke="#ffffff" stroke-width="1.1"><path d="M3.2 11.8V7.2a4.8 4.8 0 0 1 9.6 0v4.6l1.4 1.4H1.8z"/><path d="M6.4 14.2a1.8 1.8 0 0 0 3.2 0"/></g></svg>
</div></div>

</body></html>
